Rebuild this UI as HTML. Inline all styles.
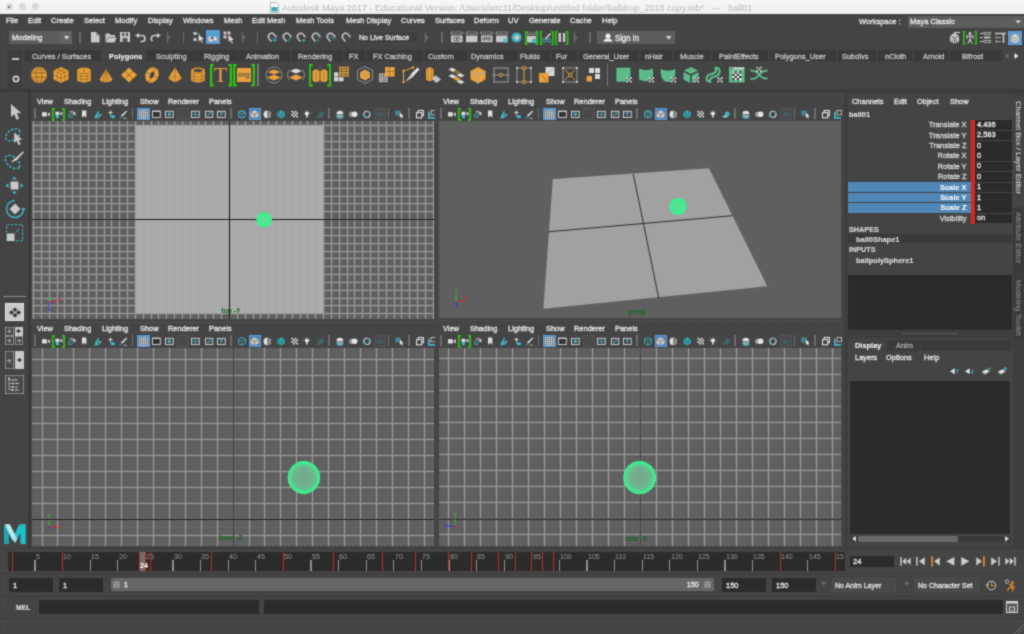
<!DOCTYPE html>
<html><head><meta charset="utf-8"><title>Autodesk Maya 2017</title>
<style>
html,body{margin:0;padding:0;}
body{width:1024px;height:634px;overflow:hidden;background:#444444;position:relative;font-family:"Liberation Sans",sans-serif;}
.t{position:absolute;white-space:pre;line-height:12px;height:12px;letter-spacing:0;transform:scaleX(0.93);transform-origin:0 50%;-webkit-text-stroke:0.32px currentColor;}
svg{overflow:visible;display:block}
#w{position:absolute;left:-6px;top:-6px;width:1036px;height:646px;background:linear-gradient(#f3f3f3 0 20px,#444444 20px);will-change:transform;filter:url(#soft);}
#i{position:absolute;left:6px;top:6px;width:1024px;height:634px;}
</style></head><body>
<svg width="0" height="0" style="position:absolute"><defs><filter id="soft" x="0" y="0" width="100%" height="100%" filterUnits="objectBoundingBox" color-interpolation-filters="sRGB"><feConvolveMatrix order="3" kernelMatrix="0.03 0.12 0.03 0.12 0.40 0.12 0.03 0.12 0.03" edgeMode="duplicate" preserveAlpha="true"/></filter></defs></svg>
<div id="w"><div id="i">

<div style="position:absolute;left:0px;top:0px;width:1024px;height:14px;background:linear-gradient(#f7f7f7,#efefef);"></div>
<div style="position:absolute;left:5.5px;top:3.1px;width:7px;height:7px;background:#dadada;border-radius:50%;"></div>
<div style="position:absolute;left:18.5px;top:3.1px;width:7px;height:7px;background:#dadada;border-radius:50%;"></div>
<div style="position:absolute;left:31.5px;top:3.1px;width:7px;height:7px;background:#dadada;border-radius:50%;"></div>
<div style="position:absolute;left:8px;top:5.6px;width:2px;height:2px;background:#555;border-radius:50%;"></div>
<svg style="position:absolute;left:270px;top:2px;" width="9" height="11" viewBox="0 0 9 11"><path d="M0.5 0.5h5.5l2.5 2.5v7.5h-8z" fill="#fff" stroke="#9aa" stroke-width="0.8"/><rect x="1.5" y="5" width="6" height="4.5" fill="#3aa6b8"/></svg>
<div class="t " style="left:282px;top:1.80px;font-size:9.05px;color:#bcbcbc;font-weight:normal;transform:none;-webkit-text-stroke:0">Autodesk Maya 2017 - Educational Version: /Users/wrc11/Desktop/untitled folder/balldrop_2018 copy.mb*   ---   ball01</div>
<div style="position:absolute;left:0px;top:14px;width:1024px;height:15px;background:#444444;"></div>
<div class="t " style="left:6px;top:15.40px;font-size:8.1px;color:#e6e6e6;font-weight:normal;">File</div>
<div class="t " style="left:28px;top:15.40px;font-size:8.1px;color:#e6e6e6;font-weight:normal;">Edit</div>
<div class="t " style="left:51px;top:15.40px;font-size:8.1px;color:#e6e6e6;font-weight:normal;">Create</div>
<div class="t " style="left:84px;top:15.40px;font-size:8.1px;color:#e6e6e6;font-weight:normal;">Select</div>
<div class="t " style="left:114.5px;top:15.40px;font-size:8.1px;color:#e6e6e6;font-weight:normal;">Modify</div>
<div class="t " style="left:148px;top:15.40px;font-size:8.1px;color:#e6e6e6;font-weight:normal;">Display</div>
<div class="t " style="left:183px;top:15.40px;font-size:8.1px;color:#e6e6e6;font-weight:normal;">Windows</div>
<div class="t " style="left:224px;top:15.40px;font-size:8.1px;color:#e6e6e6;font-weight:normal;">Mesh</div>
<div class="t " style="left:252px;top:15.40px;font-size:8.1px;color:#e6e6e6;font-weight:normal;">Edit Mesh</div>
<div class="t " style="left:296px;top:15.40px;font-size:8.1px;color:#e6e6e6;font-weight:normal;">Mesh Tools</div>
<div class="t " style="left:345.5px;top:15.40px;font-size:8.1px;color:#e6e6e6;font-weight:normal;">Mesh Display</div>
<div class="t " style="left:401px;top:15.40px;font-size:8.1px;color:#e6e6e6;font-weight:normal;">Curves</div>
<div class="t " style="left:435px;top:15.40px;font-size:8.1px;color:#e6e6e6;font-weight:normal;">Surfaces</div>
<div class="t " style="left:474px;top:15.40px;font-size:8.1px;color:#e6e6e6;font-weight:normal;">Deform</div>
<div class="t " style="left:507.5px;top:15.40px;font-size:8.1px;color:#e6e6e6;font-weight:normal;">UV</div>
<div class="t " style="left:529px;top:15.40px;font-size:8.1px;color:#e6e6e6;font-weight:normal;">Generate</div>
<div class="t " style="left:570px;top:15.40px;font-size:8.1px;color:#e6e6e6;font-weight:normal;">Cache</div>
<div class="t " style="left:601.5px;top:15.40px;font-size:8.1px;color:#e6e6e6;font-weight:normal;">Help</div>
<div class="t " style="left:859px;top:15.90px;font-size:8.1px;color:#e6e6e6;font-weight:normal;">Workspace :</div>
<div style="position:absolute;left:907.5px;top:15.5px;width:117px;height:12px;background:#5d5d5d;"></div>
<div class="t " style="left:910px;top:16.10px;font-size:8.1px;color:#e6e6e6;font-weight:normal;">Maya Classic</div>
<svg style="position:absolute;left:1015px;top:19.5px;" width="6.4" height="4" viewBox="0 0 8 5"><path d="M0.5 0.5h7l-3.5 4z" fill="#ddd"/></svg>
<div style="position:absolute;left:0px;top:29px;width:1024px;height:19px;background:#444444;"></div>
<div style="position:absolute;left:0px;top:47.5px;width:1024px;height:1px;background:#3a3a3a;"></div>
<div style="position:absolute;left:2px;top:31px;width:4px;height:14px;background:repeating-linear-gradient(#4c4c4c 0 1px,#404040 1px 2px);"></div>
<div style="position:absolute;left:9px;top:31px;width:63px;height:12.5px;background:#5d5d5d;"></div>
<div style="position:absolute;left:60px;top:31px;width:12px;height:12.5px;background:#646464;"></div>
<div class="t " style="left:11.5px;top:32.10px;font-size:8.1px;color:#e6e6e6;font-weight:normal;">Modeling</div>
<svg style="position:absolute;left:63.7px;top:35.9px;" width="5.4" height="3.5" viewBox="0 0 7 4.5"><path d="M0 0h7l-3.5 4.5z" fill="#e0e0e0"/></svg>
<div style="position:absolute;left:79.25px;top:32px;width:1.5px;height:11px;background:#6a6a6a;"></div>
<svg style="position:absolute;left:91px;top:32px;" width="9" height="10.5" viewBox="0 0 9 10.5"><path d="M0 0h5l3.5 3.5v7h-8.5z" fill="#c8c8c8"/><path d="M5 0v3.5h3.5" fill="#888"/></svg>
<svg style="position:absolute;left:104.5px;top:32.5px;" width="12" height="9.5" viewBox="0 0 12 9.5"><path d="M0.5 9.5v-9h4l1 1.5h4.5v2h-7l-2 5.5z" fill="#c8c8c8"/><path d="M1.2 9.5l2.2-5h8.4l-2.2 5z" fill="#c8c8c8"/></svg>
<svg style="position:absolute;left:120px;top:32px;" width="10" height="10" viewBox="0 0 10 10"><path d="M0 0h10v10h-10z" fill="#c8c8c8"/><rect x="2" y="0.8" width="6" height="3.4" fill="#555"/><rect x="2.5" y="6" width="5" height="4" fill="#555"/><rect x="4.2" y="1" width="1.6" height="3" fill="#c8c8c8"/></svg>
<svg style="position:absolute;left:134.5px;top:33px;" width="11" height="9" viewBox="0 0 11 9"><path d="M3.5 2.5h3.5a3 3 0 0 1 0 6h-1.5" fill="none" stroke="#c8c8c8" stroke-width="1.7"/><path d="M0 2.5l4-2.5v5z" fill="#c8c8c8"/></svg>
<svg style="position:absolute;left:149.5px;top:33px;" width="11" height="9" viewBox="0 0 11 9"><path d="M7.5 2.5h-3.5a3 3 0 0 0 -1.5 5.5" fill="none" stroke="#c8c8c8" stroke-width="1.7"/><path d="M11 2.5l-4-2.5v5z" fill="#c8c8c8"/></svg>
<svg style="position:absolute;left:167.4px;top:32px;" width="4" height="11" viewBox="0 0 4 11"><path d="M0.5 0v11" stroke="#6a6a6a" stroke-width="1.3"/><path d="M1 3l2.5 2.5l-2.5 2.5z" fill="#6a6a6a"/></svg>
<div style="position:absolute;left:182.65px;top:32px;width:1.5px;height:11px;background:#6a6a6a;"></div>
<svg style="position:absolute;left:192.5px;top:31px;" width="12" height="13" viewBox="0 0 12 13"><rect x="0.5" y="1" width="3" height="3" fill="#c8c8c8"/><rect x="0.5" y="7" width="3" height="3" fill="#c8c8c8"/><path d="M4 2.5h2v6" stroke="#3fb6c6" fill="none" stroke-width="1"/><path transform="translate(5.5,3.5) scale(0.95)" d="M0 0l0 7.5l1.9-1.6l1.5 3.1l1.4-0.7l-1.5-3l2.6-0.3z" fill="#e4e4e4" stroke="#555" stroke-width="0.4"/></svg>
<div style="position:absolute;left:206px;top:29.6px;width:14.3px;height:14.4px;background:#5b9bd5;"></div>
<svg style="position:absolute;left:207px;top:31px;" width="12" height="13" viewBox="0 0 12 13"><circle cx="4" cy="8" r="3" fill="#c8c8c8"/><path d="M4 8v-3a3 3 0 0 1 3 3z" fill="#666"/><rect x="5" y="1.5" width="4" height="4" fill="none" stroke="#3fb6c6" stroke-width="1"/><path transform="translate(6.5,4) scale(0.9)" d="M0 0l0 7.5l1.9-1.6l1.5 3.1l1.4-0.7l-1.5-3l2.6-0.3z" fill="#e4e4e4" stroke="#555" stroke-width="0.4"/></svg>
<svg style="position:absolute;left:223px;top:31px;" width="12" height="13" viewBox="0 0 12 13"><rect x="0.5" y="0.5" width="3" height="3" fill="#c8c8c8"/><rect x="4.5" y="0.5" width="3" height="3" fill="#c8c8c8"/><rect x="0.5" y="4.5" width="3" height="3" fill="#c8c8c8"/><rect x="4.5" y="4.5" width="3" height="3" fill="#d66"/><path transform="translate(5.5,4) scale(0.95)" d="M0 0l0 7.5l1.9-1.6l1.5 3.1l1.4-0.7l-1.5-3l2.6-0.3z" fill="#e4e4e4" stroke="#555" stroke-width="0.4"/></svg>
<svg style="position:absolute;left:241.5px;top:32px;" width="4" height="11" viewBox="0 0 4 11"><path d="M0.5 0v11" stroke="#6a6a6a" stroke-width="1.3"/><path d="M1 3l2.5 2.5l-2.5 2.5z" fill="#6a6a6a"/></svg>
<div style="position:absolute;left:256.75px;top:32px;width:1.5px;height:11px;background:#6a6a6a;"></div>
<svg style="position:absolute;left:266.9px;top:32.3px;" width="10.6" height="9.8" viewBox="0 0 13 12"><g transform="rotate(-40 6 6)"><path d="M2 10v-4.500a4 4 0 0 1 8 0v4.500" fill="none" stroke="#bcbcbc" stroke-width="2"/></g><path d="M7 8.5h5M7 10.5h5M8.5 7v5M10.5 7v5" stroke="#3fb6c6" stroke-width="0.7"/></svg>
<svg style="position:absolute;left:281.9px;top:32.3px;" width="10.6" height="9.8" viewBox="0 0 13 12"><g transform="rotate(-40 6 6)"><path d="M2 10v-4.500a4 4 0 0 1 8 0v4.500" fill="none" stroke="#bcbcbc" stroke-width="2"/></g><path d="M6 11q4-1 6-6" stroke="#3fb6c6" stroke-width="1.1" fill="none"/></svg>
<svg style="position:absolute;left:296.4px;top:32.3px;" width="10.6" height="9.8" viewBox="0 0 13 12"><g transform="rotate(-40 6 6)"><path d="M2 10v-4.500a4 4 0 0 1 8 0v4.500" fill="none" stroke="#bcbcbc" stroke-width="2"/></g><circle cx="9.5" cy="10" r="1.5" fill="#3fb6c6"/></svg>
<svg style="position:absolute;left:311.4px;top:32.3px;" width="10.6" height="9.8" viewBox="0 0 13 12"><g transform="rotate(-40 6 6)"><path d="M2 10v-4.500a4 4 0 0 1 8 0v4.500" fill="none" stroke="#bcbcbc" stroke-width="2"/></g><circle cx="10" cy="3" r="1.2" fill="none" stroke="#3fb6c6" stroke-width="0.7"/><circle cx="8.5" cy="10" r="1.2" fill="none" stroke="#3fb6c6" stroke-width="0.7"/></svg>
<svg style="position:absolute;left:326.4px;top:32.3px;" width="10.6" height="9.8" viewBox="0 0 13 12"><g transform="rotate(-40 6 6)"><path d="M2 10v-4.500a4 4 0 0 1 8 0v4.500" fill="none" stroke="#bcbcbc" stroke-width="2"/></g><path d="M5 5l5 5M7 4l5 5" stroke="#3fb6c6" stroke-width="0.8"/></svg>
<svg style="position:absolute;left:341.4px;top:32.3px;" width="10.6" height="9.8" viewBox="0 0 13 12"><g transform="rotate(-40 6 6)"><path d="M2 10v-4.500a4 4 0 0 1 8 0v4.500" fill="none" stroke="#bcbcbc" stroke-width="2"/></g></svg>
<div style="position:absolute;left:355.5px;top:31px;width:64px;height:12.5px;background:#404040;box-shadow:inset 0 0 0 0.5px #555;"></div>
<div class="t " style="left:359px;top:32.00px;font-size:7.6px;color:#e0e0e0;font-weight:normal;">No Live Surface</div>
<svg style="position:absolute;left:425.4px;top:32px;" width="4" height="11" viewBox="0 0 4 11"><path d="M0.5 0v11" stroke="#6a6a6a" stroke-width="1.3"/><path d="M1 3l2.5 2.5l-2.5 2.5z" fill="#6a6a6a"/></svg>
<div style="position:absolute;left:441.0px;top:32px;width:1.5px;height:11px;background:#6a6a6a;"></div>
<svg style="position:absolute;left:450.7px;top:32px;" width="11.5" height="10.5" viewBox="0 0 11.5 10.5"><path d="M0 0h11.5v2.2h-11.5z" fill="none" stroke="#c8c8c8" stroke-width="0.9" stroke-dasharray="1.6 1.2"/><rect x="0" y="3.6" width="11.5" height="6.6" fill="#c8c8c8"/><ellipse cx="5.7" cy="7" rx="3.5" ry="2" fill="none" stroke="#444" stroke-width="0.8"/><circle cx="5.7" cy="7" r="1" fill="#444"/></svg>
<svg style="position:absolute;left:465.7px;top:32px;" width="11.5" height="10.5" viewBox="0 0 11.5 10.5"><path d="M0 0h11.5v2.2h-11.5z" fill="none" stroke="#c8c8c8" stroke-width="0.9" stroke-dasharray="1.6 1.2"/><rect x="0" y="3.6" width="11.5" height="6.6" fill="#c8c8c8"/></svg>
<svg style="position:absolute;left:481px;top:32px;" width="11.5" height="10.5" viewBox="0 0 11.5 10.5"><path d="M0 0h11.5v2.2h-11.5z" fill="none" stroke="#c8c8c8" stroke-width="0.9" stroke-dasharray="1.6 1.2"/><rect x="0" y="3.6" width="11.5" height="6.6" fill="#c8c8c8"/><text x="5.7" y="9.3" font-size="5.5" font-weight="bold" text-anchor="middle" fill="#444" font-family="Liberation Sans, sans-serif">IPR</text></svg>
<svg style="position:absolute;left:496px;top:32px;" width="11.5" height="10.5" viewBox="0 0 11.5 10.5"><path d="M0 0h11.5v2.2h-11.5z" fill="none" stroke="#c8c8c8" stroke-width="0.9" stroke-dasharray="1.6 1.2"/><rect x="0" y="3.6" width="11.5" height="6.6" fill="#c8c8c8"/><circle cx="9.5" cy="8.5" r="2.6" fill="#3fb6c6" opacity="0.7"/></svg>
<svg style="position:absolute;left:511px;top:32px;" width="11" height="11" viewBox="0 0 11 11"><circle cx="5.5" cy="5.5" r="5" fill="#3fb6c6"/><circle cx="5.8" cy="5.5" r="2.3" fill="#ddc8b8"/></svg>
<svg style="position:absolute;left:526.5px;top:32.5px;" width="10" height="10" viewBox="0 0 10 10"><path d="M0 0h9v1.6h-9z" fill="none" stroke="#c8c8c8" stroke-width="0.8" stroke-dasharray="1.4 1"/><rect x="0" y="3" width="9" height="6.5" fill="#c8c8c8"/><circle cx="7.5" cy="8" r="2.4" fill="#3fb6c6"/></svg>
<svg style="position:absolute;left:524.5px;top:30.5px;" width="13.2" height="14" viewBox="0 0 13.2 14"><path d="M2.6 0.8h-1.8v12.4h1.8M10.6 0.8h1.8v12.4h-1.8" fill="none" stroke="#2fc214" stroke-width="1.6"/></svg>
<svg style="position:absolute;left:542px;top:32.5px;" width="10" height="10" viewBox="0 0 10 10"><path d="M8.5 0.5l-5 5.5" stroke="#c8c8c8" stroke-width="1.8"/><circle cx="2" cy="7.5" r="1.8" fill="none" stroke="#3fb6c6" stroke-width="1"/><circle cx="7" cy="7.5" r="1.8" fill="none" stroke="#3fb6c6" stroke-width="1"/></svg>
<svg style="position:absolute;left:539.5px;top:30.5px;" width="13.8" height="14" viewBox="0 0 13.8 14"><path d="M2.6 0.8h-1.8v12.4h1.8M11.200000000000001 0.8h1.8v12.4h-1.8" fill="none" stroke="#2fc214" stroke-width="1.6"/></svg>
<svg style="position:absolute;left:557.5px;top:33px;" width="8" height="9" viewBox="0 0 8 9"><rect x="0.5" y="0" width="2.5" height="9" fill="#c8c8c8"/><rect x="4.8" y="0" width="2.5" height="9" fill="#c8c8c8"/></svg>
<svg style="position:absolute;left:554.6px;top:30.5px;" width="13.4" height="14" viewBox="0 0 13.4 14"><path d="M2.6 0.8h-1.8v12.4h1.8M10.8 0.8h1.8v12.4h-1.8" fill="none" stroke="#2fc214" stroke-width="1.6"/></svg>
<svg style="position:absolute;left:574.3px;top:32px;" width="4" height="11" viewBox="0 0 4 11"><path d="M0.5 0v11" stroke="#6a6a6a" stroke-width="1.3"/><path d="M1 3l2.5 2.5l-2.5 2.5z" fill="#6a6a6a"/></svg>
<div style="position:absolute;left:589.25px;top:32px;width:1.5px;height:11px;background:#6a6a6a;"></div>
<div style="position:absolute;left:597.4px;top:30.5px;width:78px;height:13.3px;background:#5d5d5d;"></div>
<svg style="position:absolute;left:603px;top:32.5px;" width="10" height="10" viewBox="0 0 10 10"><circle cx="5" cy="3" r="2.6" fill="#eee"/><path d="M0 9.5q1-4 5-4q4 0 5 4z" fill="#eee"/><path d="M0 9.2h10" stroke="#222" stroke-width="0.8"/></svg>
<div class="t " style="left:615px;top:31.90px;font-size:8.3px;color:#eaeaea;font-weight:normal;">Sign In</div>
<svg style="position:absolute;left:666.3px;top:35.9px;" width="5.4" height="3.5" viewBox="0 0 7 4.5"><path d="M0 0h7l-3.5 4.5z" fill="#e0e0e0"/></svg>
<svg style="position:absolute;left:949px;top:31.5px;" width="11" height="12" viewBox="0 0 11 12"><path d="M1 3.5l4.5-2.5l4.5 2.5v6l-4.5 2.5l-4.5-2.5z" fill="#c8c8c8"/><path d="M1 3.5l4.5 2.5l4.5-2.5M5.5 6v6" stroke="#444" stroke-width="0.8" fill="none"/><path d="M3 7v4M7.5 7v4" stroke="#444" stroke-width="0.6"/><path d="M5 0.5h6" stroke="#c8c8c8" stroke-width="1.2"/></svg>
<svg style="position:absolute;left:966px;top:32px;" width="8" height="11.5" viewBox="0 0 8 11.5"><circle cx="4" cy="1.5" r="1.4" fill="#c8c8c8"/><path d="M0 4h8M4 3v4M4 7l-2 4.5M4 7l2 4.5M1 4v3M7 4v3" stroke="#c8c8c8" stroke-width="1.1" fill="none"/></svg>
<svg style="position:absolute;left:963px;top:30.7px;" width="14" height="13.6" viewBox="0 0 14 13.6"><path d="M2.6 0.8h-1.8v12.0h1.8M11.4 0.8h1.8v12.0h-1.8" fill="none" stroke="#2fc214" stroke-width="1.6"/></svg>
<svg style="position:absolute;left:980px;top:32px;" width="11" height="11" viewBox="0 0 11 11"><path d="M0 1.5h3M0 5.5h3M0 9.5h3" stroke="#c8c8c8" stroke-width="1"/><rect x="4" y="0.5" width="6.5" height="2" fill="none" stroke="#c8c8c8" stroke-width="0.8"/><rect x="4" y="4.5" width="6.5" height="2" fill="#c8c8c8"/><rect x="4" y="8.5" width="6.5" height="2" fill="none" stroke="#c8c8c8" stroke-width="0.8"/></svg>
<svg style="position:absolute;left:994.5px;top:32px;" width="11" height="11" viewBox="0 0 11 11"><path d="M0 1.5h11M8.5 1.5v9.5" stroke="#c8c8c8" stroke-width="1.6"/><circle cx="1.5" cy="5.5" r="1" fill="#c8c8c8"/><circle cx="1.5" cy="9.5" r="1" fill="#c8c8c8"/><path d="M3 5.5h3M3 9.5h3" stroke="#c8c8c8" stroke-width="0.8"/></svg>
<div style="position:absolute;left:1008px;top:30.7px;width:14px;height:14.1px;background:#5b9bd5;"></div>
<svg style="position:absolute;left:1010px;top:32.5px;" width="10" height="11" viewBox="0 0 10 11"><path d="M0.5 3l4.5-2.5l4.5 2.5v5l-4.5 2.5l-4.5-2.5z" fill="#d8d8d8" stroke="#888" stroke-width="0.6"/><path d="M0.5 3l4.5 2.5l4.5-2.5M0.5 5.5l4.5 2.5l4.5-2.5" stroke="#777" stroke-width="0.7" fill="none"/></svg>
<div style="position:absolute;left:0px;top:48px;width:1024px;height:43px;background:#444444;"></div>
<div style="position:absolute;left:0px;top:89px;width:1024px;height:3px;background:#3b3b3b;"></div>
<div style="position:absolute;left:2px;top:50px;width:4px;height:38px;background:repeating-linear-gradient(#4c4c4c 0 1px,#404040 1px 2px);"></div>
<div style="position:absolute;left:8px;top:50px;width:14px;height:39px;background:#3e3e3e;"></div>
<div style="position:absolute;left:12px;top:57.5px;width:7px;height:2.5px;background:#bdbdbd;"></div>
<svg style="position:absolute;left:11.5px;top:75px;" width="8" height="8" viewBox="0 0 8 8"><circle cx="4" cy="4" r="2.6" fill="none" stroke="#d0d0d0" stroke-width="1.7"/></svg>
<div style="position:absolute;left:24px;top:50px;width:978px;height:11.3px;background:#3a3a3a;"></div>
<div style="position:absolute;left:100.5px;top:50px;width:1.5px;height:11.3px;background:#424242;"></div>
<div class="t " style="left:32px;top:50.60px;font-size:8px;color:#c2c2c2;font-weight:normal;">Curves / Surfaces</div>
<div style="position:absolute;left:102px;top:50px;width:44px;height:12px;background:#444444;"></div>
<div class="t " style="left:108.5px;top:50.60px;font-size:8px;color:#ffffff;font-weight:bold;-webkit-text-stroke:0.05px currentColor">Polygons</div>
<div style="position:absolute;left:193.7px;top:50px;width:1.5px;height:11.3px;background:#424242;"></div>
<div class="t " style="left:155.5px;top:50.60px;font-size:8px;color:#c2c2c2;font-weight:normal;">Sculpting</div>
<div style="position:absolute;left:237.5px;top:50px;width:1.5px;height:11.3px;background:#424242;"></div>
<div class="t " style="left:204px;top:50.60px;font-size:8px;color:#c2c2c2;font-weight:normal;">Rigging</div>
<div style="position:absolute;left:290px;top:50px;width:1.5px;height:11.3px;background:#424242;"></div>
<div class="t " style="left:246px;top:50.60px;font-size:8px;color:#c2c2c2;font-weight:normal;">Animation</div>
<div style="position:absolute;left:343px;top:50px;width:1.5px;height:11.3px;background:#424242;"></div>
<div class="t " style="left:297.5px;top:50.60px;font-size:8px;color:#c2c2c2;font-weight:normal;">Rendering</div>
<div style="position:absolute;left:365px;top:50px;width:1.5px;height:11.3px;background:#424242;"></div>
<div class="t " style="left:348.5px;top:50.60px;font-size:8px;color:#c2c2c2;font-weight:normal;">FX</div>
<div style="position:absolute;left:423px;top:50px;width:1.5px;height:11.3px;background:#424242;"></div>
<div class="t " style="left:373px;top:50.60px;font-size:8px;color:#c2c2c2;font-weight:normal;">FX Caching</div>
<div style="position:absolute;left:468px;top:50px;width:1.5px;height:11.3px;background:#424242;"></div>
<div class="t " style="left:427.5px;top:50.60px;font-size:8px;color:#c2c2c2;font-weight:normal;">Custom</div>
<div style="position:absolute;left:517px;top:50px;width:1.5px;height:11.3px;background:#424242;"></div>
<div class="t " style="left:470.5px;top:50.60px;font-size:8px;color:#c2c2c2;font-weight:normal;">Dynamics</div>
<div style="position:absolute;left:550px;top:50px;width:1.5px;height:11.3px;background:#424242;"></div>
<div class="t " style="left:519.5px;top:50.60px;font-size:8px;color:#c2c2c2;font-weight:normal;">Fluids</div>
<div style="position:absolute;left:577px;top:50px;width:1.5px;height:11.3px;background:#424242;"></div>
<div class="t " style="left:556px;top:50.60px;font-size:8px;color:#c2c2c2;font-weight:normal;">Fur</div>
<div style="position:absolute;left:638px;top:50px;width:1.5px;height:11.3px;background:#424242;"></div>
<div class="t " style="left:583px;top:50.60px;font-size:8px;color:#c2c2c2;font-weight:normal;">General_User</div>
<div style="position:absolute;left:672px;top:50px;width:1.5px;height:11.3px;background:#424242;"></div>
<div class="t " style="left:644.5px;top:50.60px;font-size:8px;color:#c2c2c2;font-weight:normal;">nHair</div>
<div style="position:absolute;left:710px;top:50px;width:1.5px;height:11.3px;background:#424242;"></div>
<div class="t " style="left:679.5px;top:50.60px;font-size:8px;color:#c2c2c2;font-weight:normal;">Muscle</div>
<div style="position:absolute;left:768px;top:50px;width:1.5px;height:11.3px;background:#424242;"></div>
<div class="t " style="left:719px;top:50.60px;font-size:8px;color:#c2c2c2;font-weight:normal;">PaintEffects</div>
<div style="position:absolute;left:836px;top:50px;width:1.5px;height:11.3px;background:#424242;"></div>
<div class="t " style="left:775px;top:50.60px;font-size:8px;color:#c2c2c2;font-weight:normal;">Polygons_User</div>
<div style="position:absolute;left:876px;top:50px;width:1.5px;height:11.3px;background:#424242;"></div>
<div class="t " style="left:841.5px;top:50.60px;font-size:8px;color:#c2c2c2;font-weight:normal;">Subdivs</div>
<div style="position:absolute;left:912px;top:50px;width:1.5px;height:11.3px;background:#424242;"></div>
<div class="t " style="left:884.5px;top:50.60px;font-size:8px;color:#c2c2c2;font-weight:normal;">nCloth</div>
<div style="position:absolute;left:948px;top:50px;width:1.5px;height:11.3px;background:#424242;"></div>
<div class="t " style="left:922.5px;top:50.60px;font-size:8px;color:#c2c2c2;font-weight:normal;">Arnold</div>
<div style="position:absolute;left:1002px;top:50px;width:1.5px;height:11.3px;background:#424242;"></div>
<div class="t " style="left:961.5px;top:50.60px;font-size:8px;color:#c2c2c2;font-weight:normal;">Bifrost</div>
<svg style="position:absolute;left:1004px;top:53px;" width="5" height="6" viewBox="0 0 5 6"><path d="M4.5 0v6l-4-3z" fill="#666"/></svg>
<svg style="position:absolute;left:1014px;top:53px;" width="5" height="6" viewBox="0 0 5 6"><path d="M0.5 0v6l4-3z" fill="#e8e8e8"/></svg>
<svg style="position:absolute;left:28.5px;top:65.0px;" width="20" height="20" viewBox="0 0 20 20"><circle cx="10" cy="10" r="8" fill="#e8a13c"/><ellipse cx="10" cy="10" rx="8" ry="3" fill="none" stroke="#8f6220" stroke-width="0.7"/><ellipse cx="10" cy="6.5" rx="6.5" ry="2.2" fill="none" stroke="#8f6220" stroke-width="0.7"/><ellipse cx="10" cy="13.8" rx="6.5" ry="2.2" fill="none" stroke="#8f6220" stroke-width="0.7"/><ellipse cx="10" cy="10" rx="3" ry="8" fill="none" stroke="#8f6220" stroke-width="0.7"/></svg>
<svg style="position:absolute;left:50.6px;top:65.0px;" width="20" height="20" viewBox="0 0 20 20"><path d="M10 2l7.5 3.5v9l-7.5 3.5l-7.5-3.5v-9z" fill="#e8a13c"/><path d="M2.5 5.5l7.5 3.5l7.5-3.5M10 9v9M2.5 10l7.5 3.5l7.500-3.5M6.200 7.200v9M13.800 7.200v9M6.200 3.800l7.500 3.500M13.800 3.800l-7.500 3.500" fill="none" stroke="#8f6220" stroke-width="0.7"/></svg>
<svg style="position:absolute;left:73.7px;top:65.0px;" width="20" height="20" viewBox="0 0 20 20"><path d="M3 5.500v9a7 3 0 0 0 14 0v-9z" fill="#e8a13c"/><ellipse cx="10" cy="5.500" rx="7" ry="3" fill="#e8a13c" stroke="#8f6220" stroke-width="0.7"/><path d="M3 8.500a7 3 0 0 0 14 0M3 11.500a7 3 0 0 0 14 0M7 8v9.500M13 8v9.500M10 2.500v6" fill="none" stroke="#8f6220" stroke-width="0.7"/></svg>
<svg style="position:absolute;left:96.0px;top:65.0px;" width="20" height="20" viewBox="0 0 20 20"><path d="M10 4l6.3 10.5a6.3 2.8 0 0 1-12.6 0z" fill="#e8a13c"/><path d="M10 4v13.3M10 4l-3.3 12.6M10 4l3.3 12.6" stroke="#8f6220" stroke-width="0.7" fill="none"/></svg>
<svg style="position:absolute;left:119.4px;top:65.0px;" width="20" height="20" viewBox="0 0 20 20"><path d="M10 2.500l8 7.500l-8 7.500l-8-7.500z" fill="#e8a13c"/><path d="M6 6.200l8 7.600M14 6.200l-8 7.600" stroke="#8f6220" stroke-width="0.8"/></svg>
<svg style="position:absolute;left:142.2px;top:65.0px;" width="20" height="20" viewBox="0 0 20 20"><g transform="rotate(25 10 10)"><ellipse cx="10" cy="10" rx="6.500" ry="8" fill="#e8a13c"/><ellipse cx="10" cy="10" rx="2" ry="3.600" fill="#444444"/><path d="M10 2v4.400M10 13.600v4.400M3.500 10h4.500M12 10h4.500" stroke="#8f6220" stroke-width="0.7"/></g></svg>
<svg style="position:absolute;left:164.7px;top:65.0px;" width="20" height="20" viewBox="0 0 20 20"><path d="M10 2.500l7 11l-7 4l-7-4z" fill="#e8a13c"/><path d="M10 2.500v15" stroke="#8f6220" stroke-width="0.7"/><path d="M3 13.500l7-2l7 2" stroke="#8f6220" stroke-width="0.5" fill="none"/></svg>
<svg style="position:absolute;left:187.5px;top:65.0px;" width="20" height="20" viewBox="0 0 20 20"><path d="M3 5.500v9a7 3 0 0 0 14 0v-9z" fill="#e8a13c"/><ellipse cx="10" cy="5.500" rx="7" ry="3" fill="#e8a13c" stroke="#8f6220" stroke-width="0.6"/><ellipse cx="10" cy="5.500" rx="4.500" ry="1.800" fill="#4a4a4a"/><path d="M3 9a7 3 0 0 0 14 0M3 12a7 3 0 0 0 14 0M6 8v9M14 8v9" fill="none" stroke="#8f6220" stroke-width="0.7"/></svg>
<svg style="position:absolute;left:210px;top:64px;" width="22" height="22.5" viewBox="0 0 22 22.5"><path d="M3.7 1.15h-2.5500000000000003v20.2h2.5500000000000003M18.3 1.15h2.5500000000000003v20.2h-2.5500000000000003" fill="none" stroke="#2fc214" stroke-width="2.3"/></svg>
<div style="position:absolute;left:211.5px;top:61.1px;width:18px;height:28px;font-family:'Liberation Serif',serif;font-size:22px;line-height:28px;color:#e8a13c;text-align:center;">T</div>
<svg style="position:absolute;left:232.5px;top:64px;" width="22" height="22.5" viewBox="0 0 22 22.5"><path d="M3.7 1.15h-2.5500000000000003v20.2h2.5500000000000003M18.3 1.15h2.5500000000000003v20.2h-2.5500000000000003" fill="none" stroke="#2fc214" stroke-width="2.3"/></svg>
<div style="position:absolute;left:237px;top:67.7px;width:14px;height:14.3px;background:#e8a13c;"></div>
<div class="t " style="left:238px;top:69.10px;font-size:7.2px;color:#6a5a48;font-weight:bold;-webkit-text-stroke:0.05px currentColor">svg</div>
<div style="position:absolute;left:257.25px;top:64px;width:1.5px;height:22px;background:#767676;"></div>
<svg style="position:absolute;left:263.9px;top:65.0px;" width="20" height="20" viewBox="0 0 20 20"><circle cx="10" cy="10" r="8" fill="none" stroke="#8a8a8a" stroke-width="1"/><path d="M10 4.500l6.500 2.500l-6.500 2.500l-6.500-2.500z" fill="#e8a13c"/><path d="M10 9.500l7 3l-7 3l-7-3z" fill="#e8a13c"/></svg>
<svg style="position:absolute;left:286.0px;top:65.0px;" width="20" height="20" viewBox="0 0 20 20"><path d="M3.500 5a8 8 0 0 0 0 10M16.500 5a8 8 0 0 1 0 10" fill="none" stroke="#8a8a8a" stroke-width="1"/><path d="M10 3.500l6 2.500l-6 2.500l-6-2.500z" fill="#d8d8d8"/><path d="M10 9.500l7 3l-7 3l-7-3z" fill="#e8a13c"/></svg>
<svg style="position:absolute;left:308.5px;top:64px;" width="22" height="22.5" viewBox="0 0 22 22.5"><path d="M3.7 0.95h-2.75v20.6h2.75M18.3 0.95h2.75v20.6h-2.75" fill="none" stroke="#2fc214" stroke-width="1.9"/></svg>
<svg style="position:absolute;left:309.5px;top:65.0px;" width="20" height="20" viewBox="0 0 20 20"><path d="M2.500 6.500l2-2h3l2 2v9l-2 1.500h-3l-2-1.500z" fill="#e8a13c"/><path d="M10.500 6.500l2-2h3l2 2v9l-2 1.500h-3l-2-1.500z" fill="#e8a13c"/><path d="M6 6v10M14 6v10" stroke="#8f6220" stroke-width="0.6"/><path d="M10 2v16" stroke="#999" stroke-width="0.7" stroke-dasharray="1.500 1.500"/></svg>
<svg style="position:absolute;left:332.0px;top:65.0px;" width="20" height="20" viewBox="0 0 20 20"><rect x="2.0" y="7.3" width="4.5" height="4.2" fill="#d4d4d4"/><rect x="2.0" y="12.1" width="4.5" height="4.2" fill="#d4d4d4"/><rect x="7.1" y="7.3" width="4.5" height="4.2" fill="#d4d4d4"/><rect x="7.1" y="12.1" width="4.5" height="4.2" fill="#d4d4d4"/><rect x="6.8" y="1.2" width="10.600" height="11" fill="#444444"/><rect x="7.2" y="1.6" width="2" height="2.100" fill="#e8a13c"/><rect x="7.2" y="4.25" width="2" height="2.100" fill="#e8a13c"/><rect x="7.2" y="6.9" width="2" height="2.100" fill="#e8a13c"/><rect x="7.2" y="9.549999999999999" width="2" height="2.100" fill="#e8a13c"/><rect x="9.75" y="1.6" width="2" height="2.100" fill="#e8a13c"/><rect x="9.75" y="4.25" width="2" height="2.100" fill="#e8a13c"/><rect x="9.75" y="6.9" width="2" height="2.100" fill="#e8a13c"/><rect x="9.75" y="9.549999999999999" width="2" height="2.100" fill="#e8a13c"/><rect x="12.3" y="1.6" width="2" height="2.100" fill="#e8a13c"/><rect x="12.3" y="4.25" width="2" height="2.100" fill="#e8a13c"/><rect x="12.3" y="6.9" width="2" height="2.100" fill="#e8a13c"/><rect x="12.3" y="9.549999999999999" width="2" height="2.100" fill="#e8a13c"/><rect x="14.85" y="1.6" width="2" height="2.100" fill="#e8a13c"/><rect x="14.85" y="4.25" width="2" height="2.100" fill="#e8a13c"/><rect x="14.85" y="6.9" width="2" height="2.100" fill="#e8a13c"/><rect x="14.85" y="9.549999999999999" width="2" height="2.100" fill="#e8a13c"/></svg>
<svg style="position:absolute;left:354.5px;top:65.0px;" width="20" height="20" viewBox="0 0 20 20"><path d="M10 1.500l7.500 4v9l-7.500 4l-7.500-4v-9z" fill="none" stroke="#9a9a9a" stroke-width="0.900"/><path d="M10 4.500l5 2.700v5.600l-5 2.700l-5-2.700v-5.600z" fill="#e8a13c"/><path d="M5 7.200l5 2.600l5-2.600M10 9.800v5.700" stroke="#9a9a9a" stroke-width="0.700" fill="none"/></svg>
<svg style="position:absolute;left:377.6px;top:65.0px;" width="20" height="20" viewBox="0 0 20 20"><rect x="1.0" y="8.5" width="1.700" height="1.700" fill="#d8d8d8"/><rect x="1.0" y="10.8" width="1.700" height="1.700" fill="#d8d8d8"/><rect x="1.0" y="13.1" width="1.700" height="1.700" fill="#d8d8d8"/><rect x="1.0" y="15.399999999999999" width="1.700" height="1.700" fill="#d8d8d8"/><rect x="3.3" y="8.5" width="1.700" height="1.700" fill="#d8d8d8"/><rect x="3.3" y="10.8" width="1.700" height="1.700" fill="#d8d8d8"/><rect x="3.3" y="13.1" width="1.700" height="1.700" fill="#d8d8d8"/><rect x="3.3" y="15.399999999999999" width="1.700" height="1.700" fill="#d8d8d8"/><rect x="5.6" y="8.5" width="1.700" height="1.700" fill="#d8d8d8"/><rect x="5.6" y="10.8" width="1.700" height="1.700" fill="#d8d8d8"/><rect x="5.6" y="13.1" width="1.700" height="1.700" fill="#d8d8d8"/><rect x="5.6" y="15.399999999999999" width="1.700" height="1.700" fill="#d8d8d8"/><rect x="7.8999999999999995" y="8.5" width="1.700" height="1.700" fill="#d8d8d8"/><rect x="7.8999999999999995" y="10.8" width="1.700" height="1.700" fill="#d8d8d8"/><rect x="7.8999999999999995" y="13.1" width="1.700" height="1.700" fill="#d8d8d8"/><rect x="7.8999999999999995" y="15.399999999999999" width="1.700" height="1.700" fill="#d8d8d8"/><rect x="7" y="2" width="4.600" height="4.600" fill="#e8a13c"/><rect x="7" y="7" width="4.600" height="4.600" fill="#e8a13c"/><rect x="12" y="2" width="4.600" height="4.600" fill="#e8a13c"/><rect x="12" y="7" width="4.600" height="4.600" fill="#e8a13c"/></svg>
<svg style="position:absolute;left:400.7px;top:65.0px;" width="20" height="20" viewBox="0 0 20 20"><path d="M2.500 6l9.500-3.500M2.500 6l0 11" stroke="#e8a13c" stroke-width="1" fill="none"/><circle cx="2.500" cy="6" r="1.300" fill="#e8a13c"/><circle cx="12" cy="2.500" r="1.300" fill="#e8a13c"/><circle cx="2.500" cy="17" r="1.300" fill="#e8a13c"/><path d="M16.500 2.500l2 2l-6.500 7l-2.300-2.300z" fill="#e4e4e4"/><path d="M10 9.500l2.300 2.300l-8.300 5.200z" fill="#d4d4d4"/></svg>
<svg style="position:absolute;left:422.6px;top:65.0px;" width="20" height="20" viewBox="0 0 20 20"><path d="M3 4.500l2-2h3.500l2 2v10l-2 1.500h-3.500l-2-1.500z" fill="#e8a13c"/><path d="M5 2.500v13.500M8.500 2.500v13.500" stroke="#8f6220" stroke-width="0.500"/><path d="M9 13l4-2.500l5 4l-5 3.500z" fill="#d8d8d8"/><path d="M13.500 10.500v7M9 13l9 1.500" stroke="#888" stroke-width="0.500"/></svg>
<svg style="position:absolute;left:445.7px;top:65.0px;" width="20" height="20" viewBox="0 0 20 20"><path d="M2.500 4.500l3.500-2l4.500 2.500l-3.500 2z" fill="#d8d8d8"/><path d="M10.500 10l3.500-2l4.500 2.500l-3.500 2z" fill="#d8d8d8"/><path d="M2.500 11l3.500-2l4.500 2.500l-3.500 2z" fill="#d8d8d8"/><path d="M10.500 16.500l3.500-2l4.500 2.500l-3.500 2z" fill="#d8d8d8"/><path d="M7 13.500l3.500-2l4 2.500l-3.500 2z" fill="#e8a13c"/><path d="M7 7l3.500-2l4 2.500l-3.500 2z" fill="#8a6a3a"/></svg>
<svg style="position:absolute;left:468.2px;top:65.0px;" width="20" height="20" viewBox="0 0 20 20"><path d="M10 2l7.500 4v8.500l-7.500 4l-7.500-4v-8.500z" fill="#e8a13c"/><path d="M2.500 6l7.500 4l7.500-4M10 10v8.500" stroke="#a8a8a8" stroke-width="1.200" fill="none"/></svg>
<svg style="position:absolute;left:490.9px;top:65.0px;" width="20" height="20" viewBox="0 0 20 20"><rect x="3" y="3" width="14" height="14" fill="none" stroke="#a0a0a0" stroke-width="1"/><path d="M1.500 10h17" stroke="#a0a0a0" stroke-width="1"/><circle cx="10" cy="10" r="1.600" fill="#444444" stroke="#e8a13c" stroke-width="1"/></svg>
<svg style="position:absolute;left:513.9px;top:65.0px;" width="20" height="20" viewBox="0 0 20 20"><rect x="3" y="3" width="14" height="14" fill="none" stroke="#a0a0a0" stroke-width="0.900"/><rect x="2" y="2" width="2" height="2" fill="#c8c8c8"/><rect x="16" y="2" width="2" height="2" fill="#c8c8c8"/><rect x="2" y="16" width="2" height="2" fill="#c8c8c8"/><rect x="16" y="16" width="2" height="2" fill="#c8c8c8"/><path d="M10 3v14" stroke="#e8a13c" stroke-width="1"/><rect x="8.700" y="1.700" width="2.600" height="2.600" fill="#444444" stroke="#e8a13c" stroke-width="0.900"/><rect x="8.700" y="15.700" width="2.600" height="2.600" fill="#444444" stroke="#e8a13c" stroke-width="0.900"/></svg>
<svg style="position:absolute;left:536.7px;top:65.0px;" width="20" height="20" viewBox="0 0 20 20"><rect x="8.500" y="2" width="9" height="9" fill="#d8d8d8"/><path d="M9 10.500l8-8" stroke="#999" stroke-width="0.800"/><rect x="2" y="8" width="9.500" height="9.500" fill="#e8a13c"/><path d="M3.500 9.500l6.500 6.500" stroke="#8f6220" stroke-width="0.800"/></svg>
<svg style="position:absolute;left:559.9px;top:65.0px;" width="20" height="20" viewBox="0 0 20 20"><rect x="3" y="3" width="14" height="14" fill="none" stroke="#a0a0a0" stroke-width="0.900"/><rect x="2" y="2" width="2" height="2" fill="#c8c8c8"/><rect x="16" y="2" width="2" height="2" fill="#c8c8c8"/><rect x="2" y="16" width="2" height="2" fill="#c8c8c8"/><rect x="16" y="16" width="2" height="2" fill="#c8c8c8"/><path d="M5 5l10 10M15 5l-10 10" stroke="#e8a13c" stroke-width="0.800"/><rect x="8.500" y="8.500" width="3" height="3" fill="#444444" stroke="#e8a13c" stroke-width="0.900"/></svg>
<svg style="position:absolute;left:582.4px;top:65.0px;" width="20" height="20" viewBox="0 0 20 20"><rect x="7" y="3" width="5" height="5" fill="#d8d8d8"/><rect x="13" y="3" width="5" height="5" fill="#d8d8d8"/><rect x="13" y="9" width="5" height="5" fill="#d8d8d8"/><rect x="4.500" y="11" width="5.500" height="5.500" fill="#e8a13c"/></svg>
<div style="position:absolute;left:606.95px;top:64px;width:1.5px;height:22px;background:#767676;"></div>
<svg style="position:absolute;left:613.5px;top:65.0px;" width="20" height="20" viewBox="0 0 20 20"><rect x="2.400" y="2.700" width="14" height="14" fill="#5dbb8b"/><rect x="12.5" y="12.3" width="1.7" height="1.7" fill="#f0f0f0"/><rect x="12.5" y="14.0" width="1.7" height="1.7" fill="#3c3c3c"/><rect x="12.5" y="15.700000000000001" width="1.7" height="1.7" fill="#f0f0f0"/><rect x="14.2" y="12.3" width="1.7" height="1.7" fill="#3c3c3c"/><rect x="14.2" y="14.0" width="1.7" height="1.7" fill="#f0f0f0"/><rect x="14.2" y="15.700000000000001" width="1.7" height="1.7" fill="#3c3c3c"/><rect x="15.9" y="12.3" width="1.7" height="1.7" fill="#f0f0f0"/><rect x="15.9" y="14.0" width="1.7" height="1.7" fill="#3c3c3c"/><rect x="15.9" y="15.700000000000001" width="1.7" height="1.7" fill="#f0f0f0"/></svg>
<svg style="position:absolute;left:635.9px;top:65.0px;" width="20" height="20" viewBox="0 0 20 20"><path d="M3 3.500q7 3.500 14 0v11q-7 3.500-14 0z" fill="#5dbb8b"/><rect x="13.0" y="12.3" width="1.7" height="1.7" fill="#f0f0f0"/><rect x="13.0" y="14.0" width="1.7" height="1.7" fill="#3c3c3c"/><rect x="13.0" y="15.700000000000001" width="1.7" height="1.7" fill="#f0f0f0"/><rect x="14.7" y="12.3" width="1.7" height="1.7" fill="#3c3c3c"/><rect x="14.7" y="14.0" width="1.7" height="1.7" fill="#f0f0f0"/><rect x="14.7" y="15.700000000000001" width="1.7" height="1.7" fill="#3c3c3c"/><rect x="16.4" y="12.3" width="1.7" height="1.7" fill="#f0f0f0"/><rect x="16.4" y="14.0" width="1.7" height="1.7" fill="#3c3c3c"/><rect x="16.4" y="15.700000000000001" width="1.7" height="1.7" fill="#f0f0f0"/></svg>
<svg style="position:absolute;left:658.4px;top:65.0px;" width="20" height="20" viewBox="0 0 20 20"><path d="M2.500 4q7.500 3.500 15 0q0 13-7.500 13q-7.500 0-7.500-13z" fill="#5dbb8b"/><rect x="13.0" y="12.3" width="1.7" height="1.7" fill="#f0f0f0"/><rect x="13.0" y="14.0" width="1.7" height="1.7" fill="#3c3c3c"/><rect x="13.0" y="15.700000000000001" width="1.7" height="1.7" fill="#f0f0f0"/><rect x="14.7" y="12.3" width="1.7" height="1.7" fill="#3c3c3c"/><rect x="14.7" y="14.0" width="1.7" height="1.7" fill="#f0f0f0"/><rect x="14.7" y="15.700000000000001" width="1.7" height="1.7" fill="#3c3c3c"/><rect x="16.4" y="12.3" width="1.7" height="1.7" fill="#f0f0f0"/><rect x="16.4" y="14.0" width="1.7" height="1.7" fill="#3c3c3c"/><rect x="16.4" y="15.700000000000001" width="1.7" height="1.7" fill="#f0f0f0"/></svg>
<svg style="position:absolute;left:680.9px;top:65.0px;" width="20" height="20" viewBox="0 0 20 20"><path d="M10 2l7 3.500l-7 3.500l-7-3.500z" fill="#5dbb8b"/><path d="M2.500 7l6.700 3.400v7.600l-6.700-3.500z" fill="#5dbb8b"/><path d="M17.500 7l-6.700 3.400v7.600l6.700-3.500z" fill="#5dbb8b"/><rect x="13.0" y="12.3" width="1.7" height="1.7" fill="#f0f0f0"/><rect x="13.0" y="14.0" width="1.7" height="1.7" fill="#3c3c3c"/><rect x="13.0" y="15.700000000000001" width="1.7" height="1.7" fill="#f0f0f0"/><rect x="14.7" y="12.3" width="1.7" height="1.7" fill="#3c3c3c"/><rect x="14.7" y="14.0" width="1.7" height="1.7" fill="#f0f0f0"/><rect x="14.7" y="15.700000000000001" width="1.7" height="1.7" fill="#3c3c3c"/><rect x="16.4" y="12.3" width="1.7" height="1.7" fill="#f0f0f0"/><rect x="16.4" y="14.0" width="1.7" height="1.7" fill="#3c3c3c"/><rect x="16.4" y="15.700000000000001" width="1.7" height="1.7" fill="#f0f0f0"/></svg>
<svg style="position:absolute;left:704.0px;top:65.0px;" width="20" height="20" viewBox="0 0 20 20"><path d="M3.500 16q-2.500-5 2.500-6.500q5-1 6-3.500q0.500-2.500-1-3.500q5.500 0.500 4.500 5q-1 3.500-6 4.500q-4 1-3.500 4.500z" fill="none" stroke="#5dbb8b" stroke-width="2.200"/><rect x="13.5" y="12.3" width="1.7" height="1.7" fill="#f0f0f0"/><rect x="13.5" y="14.0" width="1.7" height="1.7" fill="#3c3c3c"/><rect x="13.5" y="15.700000000000001" width="1.7" height="1.7" fill="#f0f0f0"/><rect x="15.2" y="12.3" width="1.7" height="1.7" fill="#3c3c3c"/><rect x="15.2" y="14.0" width="1.7" height="1.7" fill="#f0f0f0"/><rect x="15.2" y="15.700000000000001" width="1.7" height="1.7" fill="#3c3c3c"/><rect x="16.9" y="12.3" width="1.7" height="1.7" fill="#f0f0f0"/><rect x="16.9" y="14.0" width="1.7" height="1.7" fill="#3c3c3c"/><rect x="16.9" y="15.700000000000001" width="1.7" height="1.7" fill="#f0f0f0"/></svg>
<svg style="position:absolute;left:729px;top:67px;" width="15.5" height="15.5" viewBox="0 0 15.5 15.5"><rect x="0" y="0" width="15.500" height="15.500" fill="#5dbb8b"/><rect x="0.500" y="0.500" width="14.500" height="2" fill="#d0d0d0"/><rect x="1" y="1" width="3" height="1" fill="#555"/><rect x="3.5" y="4.5" width="2.200" height="2.200" fill="#f0f0f0"/><rect x="3.5" y="6.7" width="2.200" height="2.200" fill="#333"/><rect x="3.5" y="8.9" width="2.200" height="2.200" fill="#f0f0f0"/><rect x="3.5" y="11.100000000000001" width="2.200" height="2.200" fill="#333"/><rect x="5.7" y="4.5" width="2.200" height="2.200" fill="#333"/><rect x="5.7" y="6.7" width="2.200" height="2.200" fill="#f0f0f0"/><rect x="5.7" y="8.9" width="2.200" height="2.200" fill="#333"/><rect x="5.7" y="11.100000000000001" width="2.200" height="2.200" fill="#f0f0f0"/><rect x="7.9" y="4.5" width="2.200" height="2.200" fill="#f0f0f0"/><rect x="7.9" y="6.7" width="2.200" height="2.200" fill="#333"/><rect x="7.9" y="8.9" width="2.200" height="2.200" fill="#f0f0f0"/><rect x="7.9" y="11.100000000000001" width="2.200" height="2.200" fill="#333"/><rect x="10.100000000000001" y="4.5" width="2.200" height="2.200" fill="#333"/><rect x="10.100000000000001" y="6.7" width="2.200" height="2.200" fill="#f0f0f0"/><rect x="10.100000000000001" y="8.9" width="2.200" height="2.200" fill="#333"/><rect x="10.100000000000001" y="11.100000000000001" width="2.200" height="2.200" fill="#f0f0f0"/></svg>
<svg style="position:absolute;left:749.0px;top:65.0px;" width="20" height="20" viewBox="0 0 20 20"><path d="M1.500 5.500q5-0.500 8.500 4q3.500 4.500 8.500 4" stroke="#5dbb8b" stroke-width="2" fill="none"/><path d="M1.500 14q5 0.500 8.500-4q3.500-4.500 8.500-4.500" stroke="#5dbb8b" stroke-width="2" fill="none"/><rect x="7.5" y="1.8" width="1.7" height="1.7" fill="#f0f0f0"/><rect x="7.5" y="3.5" width="1.7" height="1.7" fill="#3c3c3c"/><rect x="7.5" y="5.2" width="1.7" height="1.7" fill="#f0f0f0"/><rect x="9.2" y="1.8" width="1.7" height="1.7" fill="#3c3c3c"/><rect x="9.2" y="3.5" width="1.7" height="1.7" fill="#f0f0f0"/><rect x="9.2" y="5.2" width="1.7" height="1.7" fill="#3c3c3c"/><rect x="10.9" y="1.8" width="1.7" height="1.7" fill="#f0f0f0"/><rect x="10.9" y="3.5" width="1.7" height="1.7" fill="#3c3c3c"/><rect x="10.9" y="5.2" width="1.7" height="1.7" fill="#f0f0f0"/></svg>
<div style="position:absolute;left:0px;top:92px;width:30px;height:456px;background:#444444;"></div>
<div style="position:absolute;left:27.5px;top:92px;width:3px;height:456px;background:#3a3a3a;"></div>
<div style="position:absolute;left:3px;top:96px;width:22px;height:3px;background:repeating-linear-gradient(90deg,#494949 0 1px,#424242 1px 2px);"></div>
<svg style="position:absolute;left:10px;top:104px;" width="12" height="17" viewBox="0 0 12 17"><path d="M1 0l0 13l3.200-2.800l2.400 5.600l2.600-1.200l-2.500-5.300l4.400-0.400z" fill="#c8c8c8"/></svg>
<svg style="position:absolute;left:5px;top:126px;" width="20" height="20" viewBox="0 0 20 20"><ellipse cx="7.8" cy="8.8" rx="8" ry="5" transform="rotate(-35 7.8 8.8)" fill="none" stroke="#3fb6c6" stroke-width="1.5" stroke-dasharray="2.5 1.5"/><path d="M9.2 6.3l0 10.6l2.5-2.1l1.900 4.400l2.100-0.900l-2-4.200l3.500-0.300z" fill="#c8c8c8"/></svg>
<svg style="position:absolute;left:5px;top:150px;" width="20" height="20" viewBox="0 0 20 20"><ellipse cx="7.5" cy="12" rx="8.500" ry="5" transform="rotate(40 7.5 12)" fill="none" stroke="#3fb6c6" stroke-width="1.5" stroke-dasharray="2.5 1.5"/><path d="M18 1.200l1 1l-6.500 7.300l-1.800-1.800z" fill="#c8c8c8"/><path d="M10.500 8l1.800 1.800l-6.800 3z" fill="#e8e8e8"/></svg>
<svg style="position:absolute;left:5px;top:176px;" width="19" height="19" viewBox="0 0 19 19"><rect x="5.500" y="5.500" width="8" height="8" fill="#c8c8c8"/><path d="M9.500 0.500l2.500 3h-5zM9.500 18.500l2.500-3h-5zM0.500 9.500l3-2.500v5zM18.500 9.500l-3-2.500v5z" fill="#3fb6c6"/></svg>
<svg style="position:absolute;left:4.5px;top:199px;" width="20" height="20" viewBox="0 0 20 20"><path d="M10 1.500a8.500 8.500 0 1 0 8.500 8.500" fill="none" stroke="#3fb6c6" stroke-width="1.400"/><path d="M18.500 12.500l-2.200-3.500h4.200z" fill="#3fb6c6"/><path d="M10 4.500l5.500 5.500l-5.500 5.500l-5.500-5.500z" fill="#c8c8c8"/></svg>
<svg style="position:absolute;left:5.5px;top:224px;" width="18" height="18" viewBox="0 0 18 18"><rect x="0.700" y="0.700" width="16" height="16" fill="none" stroke="#3fb6c6" stroke-width="1" stroke-dasharray="2.500 1.500"/><rect x="1" y="9.500" width="7.500" height="7.500" fill="#c8c8c8"/><path d="M9.500 8.500l3.500-3.500" stroke="#3fb6c6" stroke-width="1"/></svg>
<div style="position:absolute;left:3px;top:295.5px;width:23px;height:1.3px;background:#8a8a8a;"></div>
<div style="position:absolute;left:5px;top:303px;width:18.6px;height:18px;background:#c8c8c8;box-shadow:inset 0 0 0 1px #e4e4e4;"></div>
<svg style="position:absolute;left:8.5px;top:306.5px;" width="12" height="11" viewBox="0 0 12 11"><path d="M6 0.500l2.500 2.200l-2.500 2.200l-2.500-2.200zM2.500 3.300l2.500 2.200l-2.500 2.200l-2.500-2.200zM9.500 3.300l2.500 2.200l-2.500 2.200l-2.500-2.200zM6 6.100l2.500 2.200l-2.500 2.200l-2.500-2.200z" fill="#333"/></svg>
<div style="position:absolute;left:5.0px;top:327.0px;width:8.6px;height:8.6px;background:#4a4a4a;box-shadow:inset 0 0 0 0.800px #9a9a9a;"></div>
<div style="position:absolute;left:9.0px;top:329.3px;width:0.8px;height:4.2px;background:#aaa;"></div>
<div style="position:absolute;left:7.2px;top:331.0px;width:4.2px;height:0.8px;background:#aaa;"></div>
<div style="position:absolute;left:5.0px;top:336.4px;width:8.6px;height:8.6px;background:#4a4a4a;box-shadow:inset 0 0 0 0.800px #9a9a9a;"></div>
<div style="position:absolute;left:9.0px;top:338.7px;width:0.8px;height:4.2px;background:#aaa;"></div>
<div style="position:absolute;left:7.2px;top:340.4px;width:4.2px;height:0.8px;background:#aaa;"></div>
<div style="position:absolute;left:14.6px;top:327.0px;width:8.6px;height:8.6px;background:#c8c8c8;"></div>
<svg style="position:absolute;left:16.4px;top:329.3px;" width="5" height="4" viewBox="0 0 5 4"><path d="M2.500 0l2.500 2l-2.500 2l-2.500-2z" fill="#333"/></svg>
<div style="position:absolute;left:14.6px;top:336.4px;width:8.6px;height:8.6px;background:#4a4a4a;box-shadow:inset 0 0 0 0.800px #9a9a9a;"></div>
<div style="position:absolute;left:18.6px;top:338.7px;width:0.8px;height:4.2px;background:#aaa;"></div>
<div style="position:absolute;left:16.8px;top:340.4px;width:4.2px;height:0.8px;background:#aaa;"></div>
<div style="position:absolute;left:5px;top:351px;width:8.6px;height:18.4px;background:#4a4a4a;box-shadow:inset 0 0 0 0.800px #9a9a9a;"></div>
<div style="position:absolute;left:9px;top:358.5px;width:0.8px;height:4px;background:#aaa;"></div>
<div style="position:absolute;left:7.4px;top:360.1px;width:4px;height:0.8px;background:#aaa;"></div>
<div style="position:absolute;left:14.6px;top:351px;width:9px;height:18.4px;background:#c8c8c8;"></div>
<svg style="position:absolute;left:16.6px;top:358px;" width="5" height="4" viewBox="0 0 5 4"><path d="M2.500 0l2.500 2l-2.500 2l-2.500-2z" fill="#333"/></svg>
<div style="position:absolute;left:5px;top:375px;width:18.6px;height:18.6px;background:#4a4a4a;box-shadow:inset 0 0 0 0.800px #9a9a9a;"></div>
<svg style="position:absolute;left:7px;top:377px;" width="15" height="15" viewBox="0 0 15 15"><path d="M2 1v12M2 3h2M2 6.500h3.500M2 10h3.500M2 13h3" stroke="#bbb" stroke-width="0.700" fill="none"/><circle cx="2" cy="1.500" r="1" fill="#ddd"/><circle cx="6" cy="6.500" r="1" fill="#ddd"/><circle cx="6" cy="10" r="1" fill="#ddd"/><circle cx="5.500" cy="13" r="1" fill="#ddd"/><path d="M4.500 3h6M8 6.500h4M8 10h2.500M7.500 13h4" stroke="#ccc" stroke-width="1"/></svg>
<svg style="position:absolute;left:3.5px;top:523.8px;" width="21.8" height="20.2" viewBox="0 0 22 20"><path d="M0 1.500h5v18.500h-5z" fill="#1ea6b0"/><path d="M15.300 0h6.700v20h-5.500v-11l-4.200 8l-2.600-4.500z" fill="#20bfc8"/><path d="M0.500 0h5.500l7.300 14.500l-1.800 4.500l-3.500-3.500z" fill="#9fe0e4"/><path d="M2.500 0h2l6 13l-1.200 1.500z" fill="#d8f4f4" opacity="0.800"/></svg>
<div style="position:absolute;left:30.5px;top:92px;width:814px;height:456px;background:#454545;"></div>
<div style="position:absolute;left:30.5px;top:321.8px;width:404.5px;height:1px;background:#525252;"></div>
<div style="position:absolute;left:438px;top:320px;width:405px;height:1px;background:repeating-linear-gradient(90deg,#5a5a5a 0 1px,#444 1px 2.500px);"></div>
<div style="position:absolute;left:30.5px;top:92.4px;width:404.5px;height:29px;overflow:hidden;">
<div class="t" style="left:6.9px;top:4px;font-size:8px;color:#e8e8e8;">View</div>
<div class="t" style="left:33.1px;top:4px;font-size:8px;color:#e8e8e8;">Shading</div>
<div class="t" style="left:71px;top:4px;font-size:8px;color:#e8e8e8;">Lighting</div>
<div class="t" style="left:109.1px;top:4px;font-size:8px;color:#e8e8e8;">Show</div>
<div class="t" style="left:137.5px;top:4px;font-size:8px;color:#e8e8e8;">Renderer</div>
<div class="t" style="left:178.8px;top:4px;font-size:8px;color:#e8e8e8;">Panels</div>
<div style="position:absolute;left:3.5px;top:16.1px;width:1.6px;height:11px;background:#6c6c6c"></div>
<svg style="position:absolute;left:11.09px;top:17.25px" width="7.83" height="8.70" viewBox="0 0 9.0 10"><rect x="0" y="2.500" width="5.500" height="5" fill="#dedede"/><path d="M6 5l3-2.500v5z" fill="#dedede"/></svg>
<svg style="position:absolute;left:24.59px;top:17.25px" width="7.83" height="8.70" viewBox="0 0 9 10"><rect x="0.500" y="2" width="4.500" height="4" fill="#dedede"/><path d="M5.500 4l3-2v4.500z" fill="#dedede"/><rect x="1" y="5.500" width="3.500" height="4" fill="#3fb6c6"/></svg>
<svg style="position:absolute;left:21.8px;top:15.3px" width="13" height="12.600" viewBox="0 0 13 12.600"><path d="M3 0.800h-2.200v11h2.200M10 0.800h2.200v11h-2.200" fill="none" stroke="#2fc214" stroke-width="1.700"/></svg>
<svg style="position:absolute;left:37.74px;top:17.25px" width="7.22" height="8.70" viewBox="0 0 8.299999999999997 10"><path d="M2 2h4v2" fill="none" stroke="#dedede" stroke-width="1"/><path d="M5.500 4l3-2v4.500z" fill="#dedede"/><circle cx="2.800" cy="6.500" r="2.200" fill="none" stroke="#3fb6c6" stroke-width="1.100"/></svg>
<svg style="position:absolute;left:51.83px;top:17.25px" width="4.35" height="8.70" viewBox="0 0 5.0 10"><path d="M0 0.500h5v8.500l-2.500-2.500l-2.500 2.500z" fill="#dedede"/></svg>
<svg style="position:absolute;left:63.12px;top:17.25px" width="8.27" height="8.70" viewBox="0 0 9.5 10"><path d="M0 9.500l4.500-9v9z" fill="#3fb6c6"/><path d="M5 9.500l4.500-4.500h-4.500z" fill="#999"/><path d="M4.500 0.500l1.500 1v8h-1.500z" fill="#2a8f9c"/></svg>
<svg style="position:absolute;left:76.12px;top:17.25px" width="8.27" height="8.70" viewBox="0 0 9.5 10"><path d="M4 0.500v5M1.500 3h5" stroke="#dedede" stroke-width="1.100"/><path d="M3 6h6v3.500h-4z" fill="#3fb6c6"/></svg>
<svg style="position:absolute;left:88.62px;top:17.25px" width="8.27" height="8.70" viewBox="0 0 9.5 10"><path d="M8.500 0.500l1 1l-5.500 6l-1.800-1.200z" fill="#dedede"/><path d="M0.500 9.500q3-1 4-3" stroke="#3fb6c6" stroke-width="1" fill="none"/><path d="M5 9.500h4" stroke="#dedede" stroke-width="0.800"/></svg>
<div style="position:absolute;left:101.2px;top:16.1px;width:1.6px;height:11px;background:#6c6c6c"></div>
<div style="position:absolute;left:106.8px;top:15.400000000000002px;width:12.5px;height:12.4px;background:#4a7db0;box-shadow:inset 0 0 0 1.2px #5b9bd5"></div>
<svg style="position:absolute;left:108.48px;top:17.25px" width="9.13" height="8.70" viewBox="0 0 10.5 10"><rect x="0.500" y="0.500" width="9.500" height="9" fill="#47525e"/><path d="M0.500 0.500h9.500v9h-9.500zM3 0.500v9M5.250 0.500v9M7.500 0.500v9M0.500 2.800h9.500M0.500 5h9.500M0.500 7.200h9.500" stroke="#e0e0e0" stroke-width="0.800" fill="none"/></svg>
<svg style="position:absolute;left:121.65px;top:17.25px" width="8.70" height="8.70" viewBox="0 0 10 10"><rect x="0.500" y="1.500" width="9" height="7" fill="#333" stroke="#dedede" stroke-width="1"/><path d="M0.500 1.500h9" stroke="#dedede" stroke-width="1.600" stroke-dasharray="1.200 0.800"/></svg>
<svg style="position:absolute;left:134.65px;top:17.25px" width="8.70" height="8.70" viewBox="0 0 10 10"><rect x="0.500" y="1.500" width="9" height="7" fill="none" stroke="#dedede" stroke-width="1"/><circle cx="5" cy="5" r="2" fill="#3fb6c6"/></svg>
<div style="position:absolute;left:146.5px;top:15.900000000000002px;width:11.5px;height:11.4px;background:#4a4a4a;box-shadow:inset 0 0 0 0.8px #585858;border-radius:1px"></div>
<svg style="position:absolute;left:148.12px;top:17.25px" width="8.27" height="8.70" viewBox="0 0 9.5 10"><rect x="2.500" y="2.500" width="4.500" height="4.500" fill="#4a4a4a"/></svg>
<svg style="position:absolute;left:160.65px;top:17.25px" width="8.70" height="8.70" viewBox="0 0 10 10"><rect x="0.500" y="1.500" width="9" height="7" fill="none" stroke="#dedede" stroke-width="1"/><path d="M5 1.500v7M0.500 5h9" stroke="#3fb6c6" stroke-width="0.900"/></svg>
<svg style="position:absolute;left:174.12px;top:17.25px" width="8.27" height="8.70" viewBox="0 0 9.5 10"><rect x="0.500" y="1.500" width="8.500" height="7" fill="none" stroke="#dedede" stroke-width="1"/><circle cx="3.500" cy="6" r="1.200" fill="#3fb6c6"/><circle cx="6" cy="4" r="1.200" fill="#3fb6c6"/></svg>
<svg style="position:absolute;left:186.65px;top:17.25px" width="8.70" height="8.70" viewBox="0 0 10 10"><rect x="0.500" y="1.500" width="9" height="7" fill="none" stroke="#dedede" stroke-width="1"/><path d="M3 3.500h4M5 3.500v3.500" stroke="#3fb6c6" stroke-width="1.300"/></svg>
<div style="position:absolute;left:199.7px;top:16.1px;width:1.6px;height:11px;background:#6c6c6c"></div>
<svg style="position:absolute;left:207.59px;top:17.25px" width="7.83" height="8.70" viewBox="0 0 9 10"><circle cx="4.500" cy="5" r="4" fill="none" stroke="#3fb6c6" stroke-width="1.200"/><path d="M4.500 5v4M4.500 5l-3-2.500M4.500 5l3-2.500" stroke="#3fb6c6" stroke-width="1"/></svg>
<div style="position:absolute;left:218px;top:15.400000000000002px;width:12.5px;height:12.4px;background:#4a7db0;box-shadow:inset 0 0 0 1.2px #5b9bd5"></div>
<svg style="position:absolute;left:219.68px;top:17.25px" width="9.13" height="8.70" viewBox="0 0 10.5 10"><path d="M5.250 0.300l4.500 2.400v4.800l-4.500 2.400l-4.500-2.400v-4.800z" fill="#d0c8c0"/><path d="M0.750 2.700l4.500 2.400l4.500-2.400M5.250 5.100v4.800" stroke="#6a6058" stroke-width="0.900" fill="none"/></svg>
<svg style="position:absolute;left:233.55px;top:17.25px" width="7.39" height="8.70" viewBox="0 0 8.5 10"><path d="M4 0.500a4.500 4.500 0 0 0 0 9z" fill="#e0e0e0"/><path d="M5 1.500h1.500v1.500h-1.500zM6.500 3h1.500v1.500h-1.500zM5 4.500h1.500v1.500h-1.500zM6.500 6h1.500v1.500h-1.500zM5 7.500h1.500v1.500h-1.500z" fill="#e0e0e0"/></svg>
<svg style="position:absolute;left:246.32px;top:17.25px" width="8.35" height="8.70" viewBox="0 0 9.600000000000023 10"><path d="M4.800 0.300l4.300 2.400v4.600l-4.300 2.400l-4.300-2.400v-4.600z" fill="#3fb6c6" opacity="0.850"/><path d="M0.500 2.700l4.300 2.300l4.300-2.300M4.800 5v4.700M2.600 1.500v6.800M7 1.500v6.800" stroke="#1d6f7a" stroke-width="0.700" fill="none"/></svg>
<svg style="position:absolute;left:260.05px;top:17.25px" width="7.39" height="8.70" viewBox="0 0 8.5 10"><rect x="0.5" y="1.0" width="1.900" height="1.900" fill="#eee"/><rect x="0.5" y="4.8" width="1.900" height="1.900" fill="#eee"/><rect x="2.4" y="2.9" width="1.900" height="1.900" fill="#eee"/><rect x="2.4" y="6.699999999999999" width="1.900" height="1.900" fill="#eee"/><rect x="4.3" y="1.0" width="1.900" height="1.900" fill="#eee"/><rect x="4.3" y="4.8" width="1.900" height="1.900" fill="#eee"/><rect x="6.199999999999999" y="2.9" width="1.900" height="1.900" fill="#eee"/><rect x="6.199999999999999" y="6.699999999999999" width="1.900" height="1.900" fill="#eee"/></svg>
<svg style="position:absolute;left:272.58px;top:17.25px" width="7.83" height="8.70" viewBox="0 0 9 10"><circle cx="4.500" cy="4" r="2.400" fill="#e8e8e8"/><rect x="3.500" y="6" width="2" height="2.500" fill="#ddd"/><path d="M4.500 0v0.800M0.300 4h1M7.700 4h1M1.500 1l0.700 0.700M7.500 1l-0.700 0.700" stroke="#ddd" stroke-width="0.700"/></svg>
<svg style="position:absolute;left:285.40px;top:17.25px" width="8.00" height="8.70" viewBox="0 0 9.199999999999989 10"><circle cx="6" cy="4.500" r="2.800" fill="#3f6a72"/><ellipse cx="3.500" cy="7.500" rx="3" ry="1.300" fill="#4a6a70"/></svg>
<div style="position:absolute;left:297.9px;top:16.1px;width:1.6px;height:11px;background:#6c6c6c"></div>
<svg style="position:absolute;left:305.58px;top:17.25px" width="7.83" height="8.70" viewBox="0 0 9 10"><path d="M0.500 5a4 4 0 0 1 8 0z" fill="#e0e0e0"/><path d="M0.500 5.500a4 4 0 0 0 8 0z" fill="#aaa"/><ellipse cx="4.500" cy="8.300" rx="4" ry="1.300" fill="none" stroke="#3fb6c6" stroke-width="1"/></svg>
<svg style="position:absolute;left:318.37px;top:17.25px" width="8.96" height="8.70" viewBox="0 0 10.300000000000011 10"><rect x="0" y="2" width="7" height="6" rx="3" fill="#999"/><circle cx="6.500" cy="5" r="3.200" fill="#e6e6e6"/></svg>
<svg style="position:absolute;left:332.08px;top:17.25px" width="7.83" height="8.70" viewBox="0 0 9.0 10"><circle cx="4.500" cy="5" r="3.600" fill="none" stroke="#e0e0e0" stroke-width="1.300"/><path d="M4.500 1.400a3.600 3.600 0 0 1 3.600 3.600" fill="none" stroke="#3fb6c6" stroke-width="1.300"/><path d="M4.500 8.600a3.600 3.600 0 0 1-3.600-3.600" fill="none" stroke="#3fb6c6" stroke-width="1.300"/></svg>
<div style="position:absolute;left:343.5px;top:15.900000000000002px;width:12.0px;height:11.4px;background:#4a4a4a;box-shadow:inset 0 0 0 0.8px #585858;border-radius:1px"></div>
<svg style="position:absolute;left:345.15px;top:17.25px" width="8.70" height="8.70" viewBox="0 0 10.0 10"><rect x="1.500" y="2" width="3" height="6" fill="#3f5f66"/><rect x="5.500" y="3.500" width="3" height="4.500" fill="#3f5f66"/></svg>
<div style="position:absolute;left:357.2px;top:16.1px;width:1.6px;height:11px;background:#6c6c6c"></div>
<svg style="position:absolute;left:364.68px;top:17.25px" width="9.13" height="8.70" viewBox="0 0 10.5 10"><path d="M0.500 1.500h6M0.500 3.500h6M0.500 5.500h4M1.500 0.500v6M3.500 0.500v6M5.500 0.500v4" stroke="#3fb6c6" stroke-width="0.700"/><path d="M5.500 3l0 6l1.500-1.200l1 2.200l1-0.500l-1-2.100l2-0.200z" fill="#e4e4e4"/></svg>
<div style="position:absolute;left:377.5px;top:16.1px;width:1.6px;height:11px;background:#6c6c6c"></div>
<svg style="position:absolute;left:385.08px;top:17.25px" width="7.83" height="8.70" viewBox="0 0 9.0 10"><rect x="2.500" y="0.500" width="6" height="6" fill="none" stroke="#e8e8e8" stroke-width="1.200"/><rect x="0.600" y="3" width="6" height="6" fill="#444" stroke="#e8e8e8" stroke-width="1.200"/></svg>
<svg style="position:absolute;left:397.58px;top:17.25px" width="7.83" height="8.70" viewBox="0 0 9 10"><path d="M1 2v7h7" stroke="#3fb6c6" stroke-width="2" fill="none"/><rect x="3.500" y="0.500" width="5" height="5" fill="none" stroke="#ddd" stroke-width="0.800"/></svg>
</div>
<div style="position:absolute;left:32px;top:121px;width:402px;height:198px;overflow:hidden;background:#5f5f5f;">
<svg width="402" height="198" viewBox="0 0 402 198" style="position:absolute;left:0;top:0"><path d="M1.50 0v198.0M9.50 0v198.0M17.50 0v198.0M25.50 0v198.0M32.50 0v198.0M40.50 0v198.0M48.50 0v198.0M56.50 0v198.0M64.50 0v198.0M72.50 0v198.0M79.50 0v198.0M87.50 0v198.0M95.50 0v198.0M103.50 0v198.0M111.50 0v198.0M119.50 0v198.0M126.50 0v198.0M134.50 0v198.0M142.50 0v198.0M150.50 0v198.0M158.50 0v198.0M166.50 0v198.0M173.50 0v198.0M181.50 0v198.0M189.50 0v198.0M197.50 0v198.0M205.50 0v198.0M213.50 0v198.0M221.50 0v198.0M228.50 0v198.0M236.50 0v198.0M244.50 0v198.0M252.50 0v198.0M260.50 0v198.0M268.50 0v198.0M275.50 0v198.0M283.50 0v198.0M291.50 0v198.0M299.50 0v198.0M307.50 0v198.0M315.50 0v198.0M322.50 0v198.0M330.50 0v198.0M338.50 0v198.0M346.50 0v198.0M354.50 0v198.0M362.50 0v198.0M369.50 0v198.0M377.50 0v198.0M385.50 0v198.0M393.50 0v198.0M401.50 0v198.0M0 4.50h402.0M0 12.50h402.0M0 20.50h402.0M0 28.50h402.0M0 35.50h402.0M0 43.50h402.0M0 51.50h402.0M0 59.50h402.0M0 67.50h402.0M0 75.50h402.0M0 82.50h402.0M0 90.50h402.0M0 98.50h402.0M0 106.50h402.0M0 114.50h402.0M0 122.50h402.0M0 130.50h402.0M0 137.50h402.0M0 145.50h402.0M0 153.50h402.0M0 161.50h402.0M0 169.50h402.0M0 177.50h402.0M0 184.50h402.0M0 192.50h402.0" stroke="#ffffff" stroke-width="3" opacity="0.05" fill="none"/><path d="M1.50 0v198.0M9.50 0v198.0M17.50 0v198.0M25.50 0v198.0M32.50 0v198.0M40.50 0v198.0M48.50 0v198.0M56.50 0v198.0M64.50 0v198.0M72.50 0v198.0M79.50 0v198.0M87.50 0v198.0M95.50 0v198.0M103.50 0v198.0M111.50 0v198.0M119.50 0v198.0M126.50 0v198.0M134.50 0v198.0M142.50 0v198.0M150.50 0v198.0M158.50 0v198.0M166.50 0v198.0M173.50 0v198.0M181.50 0v198.0M189.50 0v198.0M197.50 0v198.0M205.50 0v198.0M213.50 0v198.0M221.50 0v198.0M228.50 0v198.0M236.50 0v198.0M244.50 0v198.0M252.50 0v198.0M260.50 0v198.0M268.50 0v198.0M275.50 0v198.0M283.50 0v198.0M291.50 0v198.0M299.50 0v198.0M307.50 0v198.0M315.50 0v198.0M322.50 0v198.0M330.50 0v198.0M338.50 0v198.0M346.50 0v198.0M354.50 0v198.0M362.50 0v198.0M369.50 0v198.0M377.50 0v198.0M385.50 0v198.0M393.50 0v198.0M401.50 0v198.0M0 4.50h402.0M0 12.50h402.0M0 20.50h402.0M0 28.50h402.0M0 35.50h402.0M0 43.50h402.0M0 51.50h402.0M0 59.50h402.0M0 67.50h402.0M0 75.50h402.0M0 82.50h402.0M0 90.50h402.0M0 98.50h402.0M0 106.50h402.0M0 114.50h402.0M0 122.50h402.0M0 130.50h402.0M0 137.50h402.0M0 145.50h402.0M0 153.50h402.0M0 161.50h402.0M0 169.50h402.0M0 177.50h402.0M0 184.50h402.0M0 192.50h402.0" stroke="#9c9c9c" stroke-width="1" opacity="1" fill="none"/><rect x="103.00" y="4.00" width="188.50" height="188.30" fill="#ababab"/><svg x="103.00" y="4.00" width="188.50" height="188.30" viewBox="103.00 4.00 188.50 188.30" overflow="hidden"><path d="M1.50 0v198.0M9.50 0v198.0M17.50 0v198.0M25.50 0v198.0M32.50 0v198.0M40.50 0v198.0M48.50 0v198.0M56.50 0v198.0M64.50 0v198.0M72.50 0v198.0M79.50 0v198.0M87.50 0v198.0M95.50 0v198.0M103.50 0v198.0M111.50 0v198.0M119.50 0v198.0M126.50 0v198.0M134.50 0v198.0M142.50 0v198.0M150.50 0v198.0M158.50 0v198.0M166.50 0v198.0M173.50 0v198.0M181.50 0v198.0M189.50 0v198.0M197.50 0v198.0M205.50 0v198.0M213.50 0v198.0M221.50 0v198.0M228.50 0v198.0M236.50 0v198.0M244.50 0v198.0M252.50 0v198.0M260.50 0v198.0M268.50 0v198.0M275.50 0v198.0M283.50 0v198.0M291.50 0v198.0M299.50 0v198.0M307.50 0v198.0M315.50 0v198.0M322.50 0v198.0M330.50 0v198.0M338.50 0v198.0M346.50 0v198.0M354.50 0v198.0M362.50 0v198.0M369.50 0v198.0M377.50 0v198.0M385.50 0v198.0M393.50 0v198.0M401.50 0v198.0M0 4.50h402.0M0 12.50h402.0M0 20.50h402.0M0 28.50h402.0M0 35.50h402.0M0 43.50h402.0M0 51.50h402.0M0 59.50h402.0M0 67.50h402.0M0 75.50h402.0M0 82.50h402.0M0 90.50h402.0M0 98.50h402.0M0 106.50h402.0M0 114.50h402.0M0 122.50h402.0M0 130.50h402.0M0 137.50h402.0M0 145.50h402.0M0 153.50h402.0M0 161.50h402.0M0 169.50h402.0M0 177.50h402.0M0 184.50h402.0M0 192.50h402.0" stroke="#ffffff" stroke-width="3" opacity="0.011000000000000001" fill="none"/><path d="M1.50 0v198.0M9.50 0v198.0M17.50 0v198.0M25.50 0v198.0M32.50 0v198.0M40.50 0v198.0M48.50 0v198.0M56.50 0v198.0M64.50 0v198.0M72.50 0v198.0M79.50 0v198.0M87.50 0v198.0M95.50 0v198.0M103.50 0v198.0M111.50 0v198.0M119.50 0v198.0M126.50 0v198.0M134.50 0v198.0M142.50 0v198.0M150.50 0v198.0M158.50 0v198.0M166.50 0v198.0M173.50 0v198.0M181.50 0v198.0M189.50 0v198.0M197.50 0v198.0M205.50 0v198.0M213.50 0v198.0M221.50 0v198.0M228.50 0v198.0M236.50 0v198.0M244.50 0v198.0M252.50 0v198.0M260.50 0v198.0M268.50 0v198.0M275.50 0v198.0M283.50 0v198.0M291.50 0v198.0M299.50 0v198.0M307.50 0v198.0M315.50 0v198.0M322.50 0v198.0M330.50 0v198.0M338.50 0v198.0M346.50 0v198.0M354.50 0v198.0M362.50 0v198.0M369.50 0v198.0M377.50 0v198.0M385.50 0v198.0M393.50 0v198.0M401.50 0v198.0M0 4.50h402.0M0 12.50h402.0M0 20.50h402.0M0 28.50h402.0M0 35.50h402.0M0 43.50h402.0M0 51.50h402.0M0 59.50h402.0M0 67.50h402.0M0 75.50h402.0M0 82.50h402.0M0 90.50h402.0M0 98.50h402.0M0 106.50h402.0M0 114.50h402.0M0 122.50h402.0M0 130.50h402.0M0 137.50h402.0M0 145.50h402.0M0 153.50h402.0M0 161.50h402.0M0 169.50h402.0M0 177.50h402.0M0 184.50h402.0M0 192.50h402.0" stroke="#989898" stroke-width="1" opacity="0.22" fill="none"/></svg><path d="M197.5 0v198M0 98.5h402" stroke="#1c1c1c" stroke-width="1.100"/><circle cx="232.10000000000002" cy="98.80000000000001" r="7.8" fill="#40ec8e"/><circle cx="232.10000000000002" cy="98.80000000000001" r="4.29" fill="#62dc9c" opacity="0.600"/></svg>
</div>
<svg style="position:absolute;left:49.2px;top:302px" width="1" height="1" viewBox="0 0 1 1"><path d="M0 0h8" stroke="#e02020" stroke-width="0.900"/><path d="M0 0v5" stroke="#2030ff" stroke-width="0.900"/><text x="10.5" y="-0.8" font-size="4.500" font-weight="bold" fill="#e02020" text-anchor="middle" font-family="Liberation Sans, sans-serif">x</text><text x="0" y="-0.8" font-size="4.500" font-weight="bold" fill="#20d020" text-anchor="middle" font-family="Liberation Sans, sans-serif">Y</text><text x="0" y="8.6" font-size="4.500" font-weight="bold" fill="#2030ff" text-anchor="middle" font-family="Liberation Sans, sans-serif">z</text></svg>
<div class="t" style="transform-origin:50% 50%;left:200.5px;top:305.3px;width:60px;text-align:center;font-size:7.2px;font-weight:bold;color:#17651f;-webkit-text-stroke:0">top -Y</div>
<div style="position:absolute;left:436.5px;top:92.4px;width:405.5px;height:29px;overflow:hidden;">
<div class="t" style="left:6.9px;top:4px;font-size:8px;color:#e8e8e8;">View</div>
<div class="t" style="left:33.1px;top:4px;font-size:8px;color:#e8e8e8;">Shading</div>
<div class="t" style="left:71px;top:4px;font-size:8px;color:#e8e8e8;">Lighting</div>
<div class="t" style="left:109.1px;top:4px;font-size:8px;color:#e8e8e8;">Show</div>
<div class="t" style="left:137.5px;top:4px;font-size:8px;color:#e8e8e8;">Renderer</div>
<div class="t" style="left:178.8px;top:4px;font-size:8px;color:#e8e8e8;">Panels</div>
<div style="position:absolute;left:3.5px;top:16.1px;width:1.6px;height:11px;background:#6c6c6c"></div>
<svg style="position:absolute;left:11.09px;top:17.25px" width="7.83" height="8.70" viewBox="0 0 9.0 10"><rect x="0" y="2.500" width="5.500" height="5" fill="#dedede"/><path d="M6 5l3-2.500v5z" fill="#dedede"/></svg>
<svg style="position:absolute;left:24.59px;top:17.25px" width="7.83" height="8.70" viewBox="0 0 9 10"><rect x="0.500" y="2" width="4.500" height="4" fill="#dedede"/><path d="M5.500 4l3-2v4.500z" fill="#dedede"/><rect x="1" y="5.500" width="3.500" height="4" fill="#3fb6c6"/></svg>
<svg style="position:absolute;left:21.8px;top:15.3px" width="13" height="12.600" viewBox="0 0 13 12.600"><path d="M3 0.800h-2.200v11h2.200M10 0.800h2.200v11h-2.200" fill="none" stroke="#2fc214" stroke-width="1.700"/></svg>
<svg style="position:absolute;left:37.74px;top:17.25px" width="7.22" height="8.70" viewBox="0 0 8.299999999999997 10"><path d="M2 2h4v2" fill="none" stroke="#dedede" stroke-width="1"/><path d="M5.500 4l3-2v4.500z" fill="#dedede"/><circle cx="2.800" cy="6.500" r="2.200" fill="none" stroke="#3fb6c6" stroke-width="1.100"/></svg>
<svg style="position:absolute;left:51.83px;top:17.25px" width="4.35" height="8.70" viewBox="0 0 5.0 10"><path d="M0 0.500h5v8.500l-2.500-2.500l-2.500 2.500z" fill="#dedede"/></svg>
<svg style="position:absolute;left:63.12px;top:17.25px" width="8.27" height="8.70" viewBox="0 0 9.5 10"><path d="M0 9.500l4.500-9v9z" fill="#3fb6c6"/><path d="M5 9.500l4.500-4.500h-4.500z" fill="#999"/><path d="M4.500 0.500l1.500 1v8h-1.500z" fill="#2a8f9c"/></svg>
<svg style="position:absolute;left:76.12px;top:17.25px" width="8.27" height="8.70" viewBox="0 0 9.5 10"><path d="M4 0.500v5M1.500 3h5" stroke="#dedede" stroke-width="1.100"/><path d="M3 6h6v3.500h-4z" fill="#3fb6c6"/></svg>
<svg style="position:absolute;left:88.62px;top:17.25px" width="8.27" height="8.70" viewBox="0 0 9.5 10"><path d="M8.500 0.500l1 1l-5.500 6l-1.800-1.200z" fill="#dedede"/><path d="M0.500 9.500q3-1 4-3" stroke="#3fb6c6" stroke-width="1" fill="none"/><path d="M5 9.500h4" stroke="#dedede" stroke-width="0.800"/></svg>
<div style="position:absolute;left:101.2px;top:16.1px;width:1.6px;height:11px;background:#6c6c6c"></div>
<div style="position:absolute;left:106.8px;top:15.400000000000002px;width:12.5px;height:12.4px;background:#4a7db0;box-shadow:inset 0 0 0 1.2px #5b9bd5"></div>
<svg style="position:absolute;left:108.48px;top:17.25px" width="9.13" height="8.70" viewBox="0 0 10.5 10"><rect x="0.500" y="0.500" width="9.500" height="9" fill="#47525e"/><path d="M0.500 0.500h9.500v9h-9.500zM3 0.500v9M5.250 0.500v9M7.500 0.500v9M0.500 2.800h9.500M0.500 5h9.500M0.500 7.200h9.500" stroke="#e0e0e0" stroke-width="0.800" fill="none"/></svg>
<svg style="position:absolute;left:121.65px;top:17.25px" width="8.70" height="8.70" viewBox="0 0 10 10"><rect x="0.500" y="1.500" width="9" height="7" fill="#333" stroke="#dedede" stroke-width="1"/><path d="M0.500 1.500h9" stroke="#dedede" stroke-width="1.600" stroke-dasharray="1.200 0.800"/></svg>
<svg style="position:absolute;left:134.65px;top:17.25px" width="8.70" height="8.70" viewBox="0 0 10 10"><rect x="0.500" y="1.500" width="9" height="7" fill="none" stroke="#dedede" stroke-width="1"/><circle cx="5" cy="5" r="2" fill="#3fb6c6"/></svg>
<div style="position:absolute;left:146.5px;top:15.900000000000002px;width:11.5px;height:11.4px;background:#4a4a4a;box-shadow:inset 0 0 0 0.8px #585858;border-radius:1px"></div>
<svg style="position:absolute;left:148.12px;top:17.25px" width="8.27" height="8.70" viewBox="0 0 9.5 10"><rect x="2.500" y="2.500" width="4.500" height="4.500" fill="#4a4a4a"/></svg>
<svg style="position:absolute;left:160.65px;top:17.25px" width="8.70" height="8.70" viewBox="0 0 10 10"><rect x="0.500" y="1.500" width="9" height="7" fill="none" stroke="#dedede" stroke-width="1"/><path d="M5 1.500v7M0.500 5h9" stroke="#3fb6c6" stroke-width="0.900"/></svg>
<svg style="position:absolute;left:174.12px;top:17.25px" width="8.27" height="8.70" viewBox="0 0 9.5 10"><rect x="0.500" y="1.500" width="8.500" height="7" fill="none" stroke="#dedede" stroke-width="1"/><circle cx="3.500" cy="6" r="1.200" fill="#3fb6c6"/><circle cx="6" cy="4" r="1.200" fill="#3fb6c6"/></svg>
<svg style="position:absolute;left:186.65px;top:17.25px" width="8.70" height="8.70" viewBox="0 0 10 10"><rect x="0.500" y="1.500" width="9" height="7" fill="none" stroke="#dedede" stroke-width="1"/><path d="M3 3.500h4M5 3.500v3.500" stroke="#3fb6c6" stroke-width="1.300"/></svg>
<div style="position:absolute;left:199.7px;top:16.1px;width:1.6px;height:11px;background:#6c6c6c"></div>
<svg style="position:absolute;left:207.59px;top:17.25px" width="7.83" height="8.70" viewBox="0 0 9 10"><circle cx="4.500" cy="5" r="4" fill="none" stroke="#3fb6c6" stroke-width="1.200"/><path d="M4.500 5v4M4.500 5l-3-2.500M4.500 5l3-2.500" stroke="#3fb6c6" stroke-width="1"/></svg>
<div style="position:absolute;left:218px;top:15.400000000000002px;width:12.5px;height:12.4px;background:#4a7db0;box-shadow:inset 0 0 0 1.2px #5b9bd5"></div>
<svg style="position:absolute;left:219.68px;top:17.25px" width="9.13" height="8.70" viewBox="0 0 10.5 10"><path d="M5.250 0.300l4.500 2.400v4.800l-4.500 2.400l-4.500-2.400v-4.800z" fill="#d0c8c0"/><path d="M0.750 2.700l4.500 2.400l4.500-2.400M5.250 5.100v4.800" stroke="#6a6058" stroke-width="0.900" fill="none"/></svg>
<svg style="position:absolute;left:233.55px;top:17.25px" width="7.39" height="8.70" viewBox="0 0 8.5 10"><path d="M4 0.500a4.500 4.500 0 0 0 0 9z" fill="#e0e0e0"/><path d="M5 1.500h1.500v1.500h-1.500zM6.500 3h1.500v1.500h-1.500zM5 4.500h1.500v1.500h-1.500zM6.500 6h1.500v1.500h-1.500zM5 7.500h1.500v1.500h-1.500z" fill="#e0e0e0"/></svg>
<svg style="position:absolute;left:246.32px;top:17.25px" width="8.35" height="8.70" viewBox="0 0 9.600000000000023 10"><path d="M4.800 0.300l4.300 2.400v4.600l-4.300 2.400l-4.300-2.400v-4.600z" fill="#3fb6c6" opacity="0.850"/><path d="M0.500 2.700l4.300 2.300l4.300-2.300M4.800 5v4.700M2.600 1.500v6.800M7 1.500v6.800" stroke="#1d6f7a" stroke-width="0.700" fill="none"/></svg>
<svg style="position:absolute;left:260.05px;top:17.25px" width="7.39" height="8.70" viewBox="0 0 8.5 10"><rect x="0.5" y="1.0" width="1.900" height="1.900" fill="#eee"/><rect x="0.5" y="4.8" width="1.900" height="1.900" fill="#eee"/><rect x="2.4" y="2.9" width="1.900" height="1.900" fill="#eee"/><rect x="2.4" y="6.699999999999999" width="1.900" height="1.900" fill="#eee"/><rect x="4.3" y="1.0" width="1.900" height="1.900" fill="#eee"/><rect x="4.3" y="4.8" width="1.900" height="1.900" fill="#eee"/><rect x="6.199999999999999" y="2.9" width="1.900" height="1.900" fill="#eee"/><rect x="6.199999999999999" y="6.699999999999999" width="1.900" height="1.900" fill="#eee"/></svg>
<svg style="position:absolute;left:272.58px;top:17.25px" width="7.83" height="8.70" viewBox="0 0 9 10"><circle cx="4.500" cy="4" r="2.400" fill="#e8e8e8"/><rect x="3.500" y="6" width="2" height="2.500" fill="#ddd"/><path d="M4.500 0v0.800M0.300 4h1M7.700 4h1M1.500 1l0.700 0.700M7.500 1l-0.700 0.700" stroke="#ddd" stroke-width="0.700"/></svg>
<svg style="position:absolute;left:285.40px;top:17.25px" width="8.00" height="8.70" viewBox="0 0 9.199999999999989 10"><circle cx="6" cy="4.500" r="2.800" fill="#3fb6c6"/><ellipse cx="3.500" cy="7.500" rx="3" ry="1.300" fill="#9adbe4"/></svg>
<div style="position:absolute;left:297.9px;top:16.1px;width:1.6px;height:11px;background:#6c6c6c"></div>
<svg style="position:absolute;left:305.58px;top:17.25px" width="7.83" height="8.70" viewBox="0 0 9 10"><path d="M0.500 5a4 4 0 0 1 8 0z" fill="#e0e0e0"/><path d="M0.500 5.500a4 4 0 0 0 8 0z" fill="#aaa"/><ellipse cx="4.500" cy="8.300" rx="4" ry="1.300" fill="none" stroke="#3fb6c6" stroke-width="1"/></svg>
<svg style="position:absolute;left:318.37px;top:17.25px" width="8.96" height="8.70" viewBox="0 0 10.300000000000011 10"><rect x="0" y="2" width="7" height="6" rx="3" fill="#999"/><circle cx="6.500" cy="5" r="3.200" fill="#e6e6e6"/></svg>
<svg style="position:absolute;left:332.08px;top:17.25px" width="7.83" height="8.70" viewBox="0 0 9.0 10"><circle cx="4.500" cy="5" r="3.600" fill="none" stroke="#e0e0e0" stroke-width="1.300"/><path d="M4.500 1.400a3.600 3.600 0 0 1 3.600 3.600" fill="none" stroke="#3fb6c6" stroke-width="1.300"/><path d="M4.500 8.600a3.600 3.600 0 0 1-3.600-3.600" fill="none" stroke="#3fb6c6" stroke-width="1.300"/></svg>
<div style="position:absolute;left:343.5px;top:15.900000000000002px;width:12.0px;height:11.4px;background:#4a4a4a;box-shadow:inset 0 0 0 0.8px #585858;border-radius:1px"></div>
<svg style="position:absolute;left:345.15px;top:17.25px" width="8.70" height="8.70" viewBox="0 0 10.0 10"><rect x="1.500" y="2" width="3" height="6" fill="#3f5f66"/><rect x="5.500" y="3.500" width="3" height="4.500" fill="#3f5f66"/></svg>
<div style="position:absolute;left:357.2px;top:16.1px;width:1.6px;height:11px;background:#6c6c6c"></div>
<svg style="position:absolute;left:364.68px;top:17.25px" width="9.13" height="8.70" viewBox="0 0 10.5 10"><path d="M0.500 1.500h6M0.500 3.500h6M0.500 5.500h4M1.500 0.500v6M3.500 0.500v6M5.500 0.500v4" stroke="#3fb6c6" stroke-width="0.700"/><path d="M5.500 3l0 6l1.500-1.200l1 2.200l1-0.500l-1-2.100l2-0.200z" fill="#e4e4e4"/></svg>
<div style="position:absolute;left:377.5px;top:16.1px;width:1.6px;height:11px;background:#6c6c6c"></div>
<svg style="position:absolute;left:385.08px;top:17.25px" width="7.83" height="8.70" viewBox="0 0 9.0 10"><rect x="2.500" y="0.500" width="6" height="6" fill="none" stroke="#e8e8e8" stroke-width="1.200"/><rect x="0.600" y="3" width="6" height="6" fill="#444" stroke="#e8e8e8" stroke-width="1.200"/></svg>
<svg style="position:absolute;left:397.58px;top:17.25px" width="7.83" height="8.70" viewBox="0 0 9 10"><path d="M1 2v7h7" stroke="#3fb6c6" stroke-width="2" fill="none"/><rect x="3.500" y="0.500" width="5" height="5" fill="none" stroke="#ddd" stroke-width="0.800"/></svg>
</div>
<div style="position:absolute;left:439px;top:121px;width:402px;height:197px;overflow:hidden;background:#5f5f5f;">
<svg width="402" height="197" viewBox="0 0 402 197" style="position:absolute;left:0;top:0"><path d="M113.79999999999995 58L270 47.19999999999999L328.29999999999995 165.2L104.39999999999998 187.7z" fill="#a1a1a1"/><path d="M194.20000000000005 52.599999999999994L219.70000000000005 177M109.20000000000005 110.80000000000001L293.4 94.69999999999999" stroke="#262626" stroke-width="0.950"/><circle cx="239" cy="85.30000000000001" r="8.6" fill="#40ec8e"/><circle cx="239" cy="85.30000000000001" r="4.73" fill="#62dc9c" opacity="0.600"/></svg>
</div>
<svg style="position:absolute;left:455.6px;top:302.4px" width="1" height="1" viewBox="0 0 1 1"><path d="M0 0l8.300-1.100" stroke="#e02020" stroke-width="0.900"/><path d="M0 0v-7" stroke="#20d020" stroke-width="0.900"/><path d="M0 0l0.700 2" stroke="#2030ff" stroke-width="1.200"/><text x="9.7" y="-2.7" font-size="4.500" font-weight="bold" fill="#e02020" text-anchor="middle" font-family="Liberation Sans, sans-serif">x</text><text x="0" y="-9" font-size="4.500" font-weight="bold" fill="#20d020" text-anchor="middle" font-family="Liberation Sans, sans-serif">Y</text><text x="1" y="5" font-size="4.500" font-weight="bold" fill="#2030ff" text-anchor="middle" font-family="Liberation Sans, sans-serif">z</text></svg>
<div class="t" style="transform-origin:50% 50%;left:606.5px;top:305.9px;width:60px;text-align:center;font-size:6.6px;font-weight:bold;color:#17651f;-webkit-text-stroke:0">persp</div>
<div style="position:absolute;left:30.5px;top:319.3px;width:404.5px;height:29px;overflow:hidden;">
<div class="t" style="left:6.9px;top:4px;font-size:8px;color:#e8e8e8;">View</div>
<div class="t" style="left:33.1px;top:4px;font-size:8px;color:#e8e8e8;">Shading</div>
<div class="t" style="left:71px;top:4px;font-size:8px;color:#e8e8e8;">Lighting</div>
<div class="t" style="left:109.1px;top:4px;font-size:8px;color:#e8e8e8;">Show</div>
<div class="t" style="left:137.5px;top:4px;font-size:8px;color:#e8e8e8;">Renderer</div>
<div class="t" style="left:178.8px;top:4px;font-size:8px;color:#e8e8e8;">Panels</div>
<div style="position:absolute;left:3.5px;top:16.1px;width:1.6px;height:11px;background:#6c6c6c"></div>
<svg style="position:absolute;left:11.09px;top:17.25px" width="7.83" height="8.70" viewBox="0 0 9.0 10"><rect x="0" y="2.500" width="5.500" height="5" fill="#dedede"/><path d="M6 5l3-2.500v5z" fill="#dedede"/></svg>
<svg style="position:absolute;left:24.59px;top:17.25px" width="7.83" height="8.70" viewBox="0 0 9 10"><rect x="0.500" y="2" width="4.500" height="4" fill="#dedede"/><path d="M5.500 4l3-2v4.500z" fill="#dedede"/><rect x="1" y="5.500" width="3.500" height="4" fill="#3fb6c6"/></svg>
<svg style="position:absolute;left:21.8px;top:15.3px" width="13" height="12.600" viewBox="0 0 13 12.600"><path d="M3 0.800h-2.200v11h2.200M10 0.800h2.200v11h-2.200" fill="none" stroke="#2fc214" stroke-width="1.700"/></svg>
<svg style="position:absolute;left:37.74px;top:17.25px" width="7.22" height="8.70" viewBox="0 0 8.299999999999997 10"><path d="M2 2h4v2" fill="none" stroke="#dedede" stroke-width="1"/><path d="M5.500 4l3-2v4.500z" fill="#dedede"/><circle cx="2.800" cy="6.500" r="2.200" fill="none" stroke="#3fb6c6" stroke-width="1.100"/></svg>
<svg style="position:absolute;left:51.83px;top:17.25px" width="4.35" height="8.70" viewBox="0 0 5.0 10"><path d="M0 0.500h5v8.500l-2.500-2.500l-2.500 2.500z" fill="#dedede"/></svg>
<svg style="position:absolute;left:63.12px;top:17.25px" width="8.27" height="8.70" viewBox="0 0 9.5 10"><path d="M0 9.500l4.500-9v9z" fill="#3fb6c6"/><path d="M5 9.500l4.500-4.500h-4.500z" fill="#999"/><path d="M4.500 0.500l1.500 1v8h-1.500z" fill="#2a8f9c"/></svg>
<svg style="position:absolute;left:76.12px;top:17.25px" width="8.27" height="8.70" viewBox="0 0 9.5 10"><path d="M4 0.500v5M1.500 3h5" stroke="#dedede" stroke-width="1.100"/><path d="M3 6h6v3.500h-4z" fill="#3fb6c6"/></svg>
<svg style="position:absolute;left:88.62px;top:17.25px" width="8.27" height="8.70" viewBox="0 0 9.5 10"><path d="M8.500 0.500l1 1l-5.500 6l-1.800-1.200z" fill="#dedede"/><path d="M0.500 9.500q3-1 4-3" stroke="#3fb6c6" stroke-width="1" fill="none"/><path d="M5 9.500h4" stroke="#dedede" stroke-width="0.800"/></svg>
<div style="position:absolute;left:101.2px;top:16.1px;width:1.6px;height:11px;background:#6c6c6c"></div>
<div style="position:absolute;left:106.8px;top:15.400000000000002px;width:12.5px;height:12.4px;background:#4a7db0;box-shadow:inset 0 0 0 1.2px #5b9bd5"></div>
<svg style="position:absolute;left:108.48px;top:17.25px" width="9.13" height="8.70" viewBox="0 0 10.5 10"><rect x="0.500" y="0.500" width="9.500" height="9" fill="#47525e"/><path d="M0.500 0.500h9.500v9h-9.500zM3 0.500v9M5.250 0.500v9M7.500 0.500v9M0.500 2.800h9.500M0.500 5h9.500M0.500 7.200h9.500" stroke="#e0e0e0" stroke-width="0.800" fill="none"/></svg>
<svg style="position:absolute;left:121.65px;top:17.25px" width="8.70" height="8.70" viewBox="0 0 10 10"><rect x="0.500" y="1.500" width="9" height="7" fill="#333" stroke="#dedede" stroke-width="1"/><path d="M0.500 1.500h9" stroke="#dedede" stroke-width="1.600" stroke-dasharray="1.200 0.800"/></svg>
<svg style="position:absolute;left:134.65px;top:17.25px" width="8.70" height="8.70" viewBox="0 0 10 10"><rect x="0.500" y="1.500" width="9" height="7" fill="none" stroke="#dedede" stroke-width="1"/><circle cx="5" cy="5" r="2" fill="#3fb6c6"/></svg>
<div style="position:absolute;left:146.5px;top:15.900000000000002px;width:11.5px;height:11.4px;background:#4a4a4a;box-shadow:inset 0 0 0 0.8px #585858;border-radius:1px"></div>
<svg style="position:absolute;left:148.12px;top:17.25px" width="8.27" height="8.70" viewBox="0 0 9.5 10"><rect x="2.500" y="2.500" width="4.500" height="4.500" fill="#4a4a4a"/></svg>
<svg style="position:absolute;left:160.65px;top:17.25px" width="8.70" height="8.70" viewBox="0 0 10 10"><rect x="0.500" y="1.500" width="9" height="7" fill="none" stroke="#dedede" stroke-width="1"/><path d="M5 1.500v7M0.500 5h9" stroke="#3fb6c6" stroke-width="0.900"/></svg>
<svg style="position:absolute;left:174.12px;top:17.25px" width="8.27" height="8.70" viewBox="0 0 9.5 10"><rect x="0.500" y="1.500" width="8.500" height="7" fill="none" stroke="#dedede" stroke-width="1"/><circle cx="3.500" cy="6" r="1.200" fill="#3fb6c6"/><circle cx="6" cy="4" r="1.200" fill="#3fb6c6"/></svg>
<svg style="position:absolute;left:186.65px;top:17.25px" width="8.70" height="8.70" viewBox="0 0 10 10"><rect x="0.500" y="1.500" width="9" height="7" fill="none" stroke="#dedede" stroke-width="1"/><path d="M3 3.500h4M5 3.500v3.500" stroke="#3fb6c6" stroke-width="1.300"/></svg>
<div style="position:absolute;left:199.7px;top:16.1px;width:1.6px;height:11px;background:#6c6c6c"></div>
<svg style="position:absolute;left:207.59px;top:17.25px" width="7.83" height="8.70" viewBox="0 0 9 10"><path d="M4.500 0.500l4 2.200v4.600l-4 2.200l-4-2.200v-4.600z" fill="none" stroke="#3fb6c6" stroke-width="1"/><path d="M0.500 2.700l4 2.300l4-2.300M4.500 5v4.500" stroke="#3fb6c6" stroke-width="0.800" fill="none"/></svg>
<div style="position:absolute;left:218px;top:15.400000000000002px;width:12.5px;height:12.4px;background:#4a7db0;box-shadow:inset 0 0 0 1.2px #5b9bd5"></div>
<svg style="position:absolute;left:219.68px;top:17.25px" width="9.13" height="8.70" viewBox="0 0 10.5 10"><path d="M5.250 0.300l4.500 2.400v4.800l-4.500 2.400l-4.500-2.400v-4.800z" fill="#d0c8c0"/><path d="M0.750 2.700l4.500 2.400l4.500-2.400M5.250 5.100v4.800" stroke="#6a6058" stroke-width="0.900" fill="none"/></svg>
<svg style="position:absolute;left:233.55px;top:17.25px" width="7.39" height="8.70" viewBox="0 0 8.5 10"><path d="M4 0.500a4.500 4.500 0 0 0 0 9z" fill="#e0e0e0"/><path d="M5 1.500h1.500v1.500h-1.500zM6.500 3h1.500v1.500h-1.500zM5 4.500h1.500v1.500h-1.500zM6.500 6h1.500v1.500h-1.500zM5 7.500h1.500v1.500h-1.500z" fill="#e0e0e0"/></svg>
<svg style="position:absolute;left:246.32px;top:17.25px" width="8.35" height="8.70" viewBox="0 0 9.600000000000023 10"><path d="M4.800 0.300l4.300 2.400v4.600l-4.300 2.400l-4.300-2.400v-4.600z" fill="#3fb6c6" opacity="0.850"/><path d="M0.500 2.700l4.300 2.300l4.300-2.300M4.800 5v4.700M2.600 1.500v6.800M7 1.500v6.800" stroke="#1d6f7a" stroke-width="0.700" fill="none"/></svg>
<svg style="position:absolute;left:260.05px;top:17.25px" width="7.39" height="8.70" viewBox="0 0 8.5 10"><rect x="0.5" y="1.0" width="1.900" height="1.900" fill="#eee"/><rect x="0.5" y="4.8" width="1.900" height="1.900" fill="#eee"/><rect x="2.4" y="2.9" width="1.900" height="1.900" fill="#eee"/><rect x="2.4" y="6.699999999999999" width="1.900" height="1.900" fill="#eee"/><rect x="4.3" y="1.0" width="1.900" height="1.900" fill="#eee"/><rect x="4.3" y="4.8" width="1.900" height="1.900" fill="#eee"/><rect x="6.199999999999999" y="2.9" width="1.900" height="1.900" fill="#eee"/><rect x="6.199999999999999" y="6.699999999999999" width="1.900" height="1.900" fill="#eee"/></svg>
<svg style="position:absolute;left:272.58px;top:17.25px" width="7.83" height="8.70" viewBox="0 0 9 10"><circle cx="4.500" cy="4" r="2.400" fill="#e8e8e8"/><rect x="3.500" y="6" width="2" height="2.500" fill="#ddd"/><path d="M4.500 0v0.800M0.300 4h1M7.700 4h1M1.500 1l0.700 0.700M7.500 1l-0.700 0.700" stroke="#ddd" stroke-width="0.700"/></svg>
<svg style="position:absolute;left:285.40px;top:17.25px" width="8.00" height="8.70" viewBox="0 0 9.199999999999989 10"><circle cx="6" cy="4.500" r="2.800" fill="#3f6a72"/><ellipse cx="3.500" cy="7.500" rx="3" ry="1.300" fill="#4a6a70"/></svg>
<div style="position:absolute;left:297.9px;top:16.1px;width:1.6px;height:11px;background:#6c6c6c"></div>
<svg style="position:absolute;left:305.58px;top:17.25px" width="7.83" height="8.70" viewBox="0 0 9 10"><path d="M0.500 5a4 4 0 0 1 8 0z" fill="#e0e0e0"/><path d="M0.500 5.500a4 4 0 0 0 8 0z" fill="#aaa"/><ellipse cx="4.500" cy="8.300" rx="4" ry="1.300" fill="none" stroke="#3fb6c6" stroke-width="1"/></svg>
<svg style="position:absolute;left:318.37px;top:17.25px" width="8.96" height="8.70" viewBox="0 0 10.300000000000011 10"><rect x="0" y="2" width="7" height="6" rx="3" fill="#999"/><circle cx="6.500" cy="5" r="3.200" fill="#e6e6e6"/></svg>
<svg style="position:absolute;left:332.08px;top:17.25px" width="7.83" height="8.70" viewBox="0 0 9.0 10"><circle cx="4.500" cy="5" r="3.600" fill="none" stroke="#e0e0e0" stroke-width="1.300"/><path d="M4.500 1.400a3.600 3.600 0 0 1 3.600 3.600" fill="none" stroke="#3fb6c6" stroke-width="1.300"/><path d="M4.500 8.600a3.600 3.600 0 0 1-3.600-3.600" fill="none" stroke="#3fb6c6" stroke-width="1.300"/></svg>
<div style="position:absolute;left:343.5px;top:15.900000000000002px;width:12.0px;height:11.4px;background:#4a4a4a;box-shadow:inset 0 0 0 0.8px #585858;border-radius:1px"></div>
<svg style="position:absolute;left:345.15px;top:17.25px" width="8.70" height="8.70" viewBox="0 0 10.0 10"><rect x="1.500" y="2" width="3" height="6" fill="#3f5f66"/><rect x="5.500" y="3.500" width="3" height="4.500" fill="#3f5f66"/></svg>
<div style="position:absolute;left:357.2px;top:16.1px;width:1.6px;height:11px;background:#6c6c6c"></div>
<svg style="position:absolute;left:364.68px;top:17.25px" width="9.13" height="8.70" viewBox="0 0 10.5 10"><path d="M0.500 1.500h6M0.500 3.500h6M0.500 5.500h4M1.500 0.500v6M3.500 0.500v6M5.500 0.500v4" stroke="#3fb6c6" stroke-width="0.700"/><path d="M5.500 3l0 6l1.500-1.200l1 2.200l1-0.500l-1-2.100l2-0.200z" fill="#e4e4e4"/></svg>
<div style="position:absolute;left:377.5px;top:16.1px;width:1.6px;height:11px;background:#6c6c6c"></div>
<svg style="position:absolute;left:385.08px;top:17.25px" width="7.83" height="8.70" viewBox="0 0 9.0 10"><rect x="2.500" y="0.500" width="6" height="6" fill="none" stroke="#e8e8e8" stroke-width="1.200"/><rect x="0.600" y="3" width="6" height="6" fill="#444" stroke="#e8e8e8" stroke-width="1.200"/></svg>
<svg style="position:absolute;left:397.58px;top:17.25px" width="7.83" height="8.70" viewBox="0 0 9 10"><path d="M1 2v7h7" stroke="#3fb6c6" stroke-width="2" fill="none"/><rect x="3.500" y="0.500" width="5" height="5" fill="none" stroke="#ddd" stroke-width="0.800"/></svg>
</div>
<div style="position:absolute;left:32px;top:348px;width:402px;height:198px;overflow:hidden;background:#5f5f5f;">
<svg width="402" height="198" viewBox="0 0 402 198" style="position:absolute;left:0;top:0"><path d="M18.46 0v198.0M33.46 0v198.0M49.46 0v198.0M65.46 0v198.0M81.46 0v198.0M97.46 0v198.0M113.46 0v198.0M129.46 0v198.0M145.46 0v198.0M161.46 0v198.0M177.46 0v198.0M193.46 0v198.0M209.46 0v198.0M225.46 0v198.0M240.46 0v198.0M256.46 0v198.0M272.46 0v198.0M288.46 0v198.0M304.46 0v198.0M320.46 0v198.0M336.46 0v198.0M352.46 0v198.0M368.46 0v198.0M384.46 0v198.0M400.46 0v198.0M0 19.50h402.0M0 35.50h402.0M0 51.50h402.0M0 67.50h402.0M0 83.50h402.0M0 99.50h402.0M0 115.50h402.0M0 131.50h402.0M0 147.50h402.0M0 163.50h402.0M0 179.50h402.0M0 195.50h402.0" stroke="#6c6c6c" stroke-width="0.800" opacity="0.450" fill="none"/><path d="M10.50 0v198.0M25.50 0v198.0M41.50 0v198.0M57.50 0v198.0M73.50 0v198.0M89.50 0v198.0M105.50 0v198.0M121.50 0v198.0M137.50 0v198.0M153.50 0v198.0M169.50 0v198.0M185.50 0v198.0M201.50 0v198.0M217.50 0v198.0M232.50 0v198.0M248.50 0v198.0M264.50 0v198.0M280.50 0v198.0M296.50 0v198.0M312.50 0v198.0M328.50 0v198.0M344.50 0v198.0M360.50 0v198.0M376.50 0v198.0M392.50 0v198.0M0 11.50h402.0M0 27.50h402.0M0 43.50h402.0M0 59.50h402.0M0 75.50h402.0M0 91.50h402.0M0 107.50h402.0M0 123.50h402.0M0 139.50h402.0M0 155.50h402.0M0 171.50h402.0M0 187.50h402.0" stroke="#ffffff" stroke-width="3" opacity="0.05" fill="none"/><path d="M10.50 0v198.0M25.50 0v198.0M41.50 0v198.0M57.50 0v198.0M73.50 0v198.0M89.50 0v198.0M105.50 0v198.0M121.50 0v198.0M137.50 0v198.0M153.50 0v198.0M169.50 0v198.0M185.50 0v198.0M201.50 0v198.0M217.50 0v198.0M232.50 0v198.0M248.50 0v198.0M264.50 0v198.0M280.50 0v198.0M296.50 0v198.0M312.50 0v198.0M328.50 0v198.0M344.50 0v198.0M360.50 0v198.0M376.50 0v198.0M392.50 0v198.0M0 11.50h402.0M0 27.50h402.0M0 43.50h402.0M0 59.50h402.0M0 75.50h402.0M0 91.50h402.0M0 107.50h402.0M0 123.50h402.0M0 139.50h402.0M0 155.50h402.0M0 171.50h402.0M0 187.50h402.0" stroke="#9a9a9a" stroke-width="1" opacity="1" fill="none"/><path d="M0 171.5h402" stroke="#1c1c1c" stroke-width="1.100"/><path d="M201.5 0v198" stroke="#404040" stroke-width="1.100"/><defs><radialGradient id="b271"><stop offset="0" stop-color="#8a928d"/><stop offset="0.65" stop-color="#859c90"/><stop offset="0.88" stop-color="#60cc96"/><stop offset="1" stop-color="#3cee8e"/></radialGradient></defs><circle cx="271.9" cy="129.5" r="16.0" fill="url(#b271)"/><path d="M269.40 113.70h5.01M266.96 114.28h9.89M264.64 115.24h14.53M262.50 116.56h18.81M260.59 118.19h22.63M258.96 120.10h25.89M257.64 122.24h28.51M256.68 124.56h30.43M256.10 127.00h31.61M255.90 129.50h32.00M256.10 132.00h31.61M256.68 134.44h30.43M257.64 136.76h28.51M258.96 138.90h25.89M260.59 140.81h22.63M262.50 142.44h18.81M264.64 143.76h14.53M266.96 144.72h9.89M269.40 145.30h5.01" stroke="#3cf090" stroke-width="0.650" opacity="0.550" fill="none"/><ellipse cx="271.9" cy="129.5" rx="0.00" ry="16.0" fill="none" stroke="#3cf090" stroke-width="0.650" opacity="0.550"/><ellipse cx="271.9" cy="129.5" rx="2.50" ry="16.0" fill="none" stroke="#3cf090" stroke-width="0.650" opacity="0.550"/><ellipse cx="271.9" cy="129.5" rx="4.94" ry="16.0" fill="none" stroke="#3cf090" stroke-width="0.650" opacity="0.550"/><ellipse cx="271.9" cy="129.5" rx="7.26" ry="16.0" fill="none" stroke="#3cf090" stroke-width="0.650" opacity="0.550"/><ellipse cx="271.9" cy="129.5" rx="9.40" ry="16.0" fill="none" stroke="#3cf090" stroke-width="0.650" opacity="0.550"/><ellipse cx="271.9" cy="129.5" rx="11.31" ry="16.0" fill="none" stroke="#3cf090" stroke-width="0.650" opacity="0.550"/><ellipse cx="271.9" cy="129.5" rx="12.94" ry="16.0" fill="none" stroke="#3cf090" stroke-width="0.650" opacity="0.550"/><ellipse cx="271.9" cy="129.5" rx="14.26" ry="16.0" fill="none" stroke="#3cf090" stroke-width="0.650" opacity="0.550"/><ellipse cx="271.9" cy="129.5" rx="15.22" ry="16.0" fill="none" stroke="#3cf090" stroke-width="0.650" opacity="0.550"/><ellipse cx="271.9" cy="129.5" rx="15.80" ry="16.0" fill="none" stroke="#3cf090" stroke-width="0.650" opacity="0.550"/><circle cx="271.9" cy="129.5" r="15.6" fill="none" stroke="#3cf090" stroke-width="1.200"/></svg>
</div>
<svg style="position:absolute;left:48.9px;top:527px" width="1" height="1" viewBox="0 0 1 1"><path d="M0 0h8" stroke="#e02020" stroke-width="0.900"/><path d="M0 0v-7" stroke="#20d020" stroke-width="0.900"/><text x="10.5" y="1.3" font-size="4.500" font-weight="bold" fill="#e02020" text-anchor="middle" font-family="Liberation Sans, sans-serif">x</text><text x="0" y="-9" font-size="4.500" font-weight="bold" fill="#20d020" text-anchor="middle" font-family="Liberation Sans, sans-serif">Y</text><text x="-0.5" y="1.5" font-size="4.500" font-weight="bold" fill="#2030ff" text-anchor="middle" font-family="Liberation Sans, sans-serif">z</text></svg>
<div class="t" style="transform-origin:50% 50%;left:201px;top:532.2px;width:60px;text-align:center;font-size:7.2px;font-weight:bold;color:#17651f;-webkit-text-stroke:0">front -Z</div>
<div style="position:absolute;left:436.5px;top:319.3px;width:405.5px;height:29px;overflow:hidden;">
<div class="t" style="left:6.9px;top:4px;font-size:8px;color:#e8e8e8;">View</div>
<div class="t" style="left:33.1px;top:4px;font-size:8px;color:#e8e8e8;">Shading</div>
<div class="t" style="left:71px;top:4px;font-size:8px;color:#e8e8e8;">Lighting</div>
<div class="t" style="left:109.1px;top:4px;font-size:8px;color:#e8e8e8;">Show</div>
<div class="t" style="left:137.5px;top:4px;font-size:8px;color:#e8e8e8;">Renderer</div>
<div class="t" style="left:178.8px;top:4px;font-size:8px;color:#e8e8e8;">Panels</div>
<div style="position:absolute;left:3.5px;top:16.1px;width:1.6px;height:11px;background:#6c6c6c"></div>
<svg style="position:absolute;left:11.09px;top:17.25px" width="7.83" height="8.70" viewBox="0 0 9.0 10"><rect x="0" y="2.500" width="5.500" height="5" fill="#dedede"/><path d="M6 5l3-2.500v5z" fill="#dedede"/></svg>
<svg style="position:absolute;left:24.59px;top:17.25px" width="7.83" height="8.70" viewBox="0 0 9 10"><rect x="0.500" y="2" width="4.500" height="4" fill="#dedede"/><path d="M5.500 4l3-2v4.500z" fill="#dedede"/><rect x="1" y="5.500" width="3.500" height="4" fill="#3fb6c6"/></svg>
<svg style="position:absolute;left:21.8px;top:15.3px" width="13" height="12.600" viewBox="0 0 13 12.600"><path d="M3 0.800h-2.200v11h2.200M10 0.800h2.200v11h-2.200" fill="none" stroke="#2fc214" stroke-width="1.700"/></svg>
<svg style="position:absolute;left:37.74px;top:17.25px" width="7.22" height="8.70" viewBox="0 0 8.299999999999997 10"><path d="M2 2h4v2" fill="none" stroke="#dedede" stroke-width="1"/><path d="M5.500 4l3-2v4.500z" fill="#dedede"/><circle cx="2.800" cy="6.500" r="2.200" fill="none" stroke="#3fb6c6" stroke-width="1.100"/></svg>
<svg style="position:absolute;left:51.83px;top:17.25px" width="4.35" height="8.70" viewBox="0 0 5.0 10"><path d="M0 0.500h5v8.500l-2.500-2.500l-2.500 2.500z" fill="#dedede"/></svg>
<svg style="position:absolute;left:63.12px;top:17.25px" width="8.27" height="8.70" viewBox="0 0 9.5 10"><path d="M0 9.500l4.500-9v9z" fill="#3fb6c6"/><path d="M5 9.500l4.500-4.500h-4.500z" fill="#999"/><path d="M4.500 0.500l1.500 1v8h-1.500z" fill="#2a8f9c"/></svg>
<svg style="position:absolute;left:76.12px;top:17.25px" width="8.27" height="8.70" viewBox="0 0 9.5 10"><path d="M4 0.500v5M1.500 3h5" stroke="#dedede" stroke-width="1.100"/><path d="M3 6h6v3.500h-4z" fill="#3fb6c6"/></svg>
<svg style="position:absolute;left:88.62px;top:17.25px" width="8.27" height="8.70" viewBox="0 0 9.5 10"><path d="M8.500 0.500l1 1l-5.500 6l-1.800-1.200z" fill="#dedede"/><path d="M0.500 9.500q3-1 4-3" stroke="#3fb6c6" stroke-width="1" fill="none"/><path d="M5 9.500h4" stroke="#dedede" stroke-width="0.800"/></svg>
<div style="position:absolute;left:101.2px;top:16.1px;width:1.6px;height:11px;background:#6c6c6c"></div>
<div style="position:absolute;left:106.8px;top:15.400000000000002px;width:12.5px;height:12.4px;background:#4a7db0;box-shadow:inset 0 0 0 1.2px #5b9bd5"></div>
<svg style="position:absolute;left:108.48px;top:17.25px" width="9.13" height="8.70" viewBox="0 0 10.5 10"><rect x="0.500" y="0.500" width="9.500" height="9" fill="#47525e"/><path d="M0.500 0.500h9.500v9h-9.500zM3 0.500v9M5.250 0.500v9M7.500 0.500v9M0.500 2.800h9.500M0.500 5h9.500M0.500 7.200h9.500" stroke="#e0e0e0" stroke-width="0.800" fill="none"/></svg>
<svg style="position:absolute;left:121.65px;top:17.25px" width="8.70" height="8.70" viewBox="0 0 10 10"><rect x="0.500" y="1.500" width="9" height="7" fill="#333" stroke="#dedede" stroke-width="1"/><path d="M0.500 1.500h9" stroke="#dedede" stroke-width="1.600" stroke-dasharray="1.200 0.800"/></svg>
<svg style="position:absolute;left:134.65px;top:17.25px" width="8.70" height="8.70" viewBox="0 0 10 10"><rect x="0.500" y="1.500" width="9" height="7" fill="none" stroke="#dedede" stroke-width="1"/><circle cx="5" cy="5" r="2" fill="#3fb6c6"/></svg>
<div style="position:absolute;left:146.5px;top:15.900000000000002px;width:11.5px;height:11.4px;background:#4a4a4a;box-shadow:inset 0 0 0 0.8px #585858;border-radius:1px"></div>
<svg style="position:absolute;left:148.12px;top:17.25px" width="8.27" height="8.70" viewBox="0 0 9.5 10"><rect x="2.500" y="2.500" width="4.500" height="4.500" fill="#4a4a4a"/></svg>
<svg style="position:absolute;left:160.65px;top:17.25px" width="8.70" height="8.70" viewBox="0 0 10 10"><rect x="0.500" y="1.500" width="9" height="7" fill="none" stroke="#dedede" stroke-width="1"/><path d="M5 1.500v7M0.500 5h9" stroke="#3fb6c6" stroke-width="0.900"/></svg>
<svg style="position:absolute;left:174.12px;top:17.25px" width="8.27" height="8.70" viewBox="0 0 9.5 10"><rect x="0.500" y="1.500" width="8.500" height="7" fill="none" stroke="#dedede" stroke-width="1"/><circle cx="3.500" cy="6" r="1.200" fill="#3fb6c6"/><circle cx="6" cy="4" r="1.200" fill="#3fb6c6"/></svg>
<svg style="position:absolute;left:186.65px;top:17.25px" width="8.70" height="8.70" viewBox="0 0 10 10"><rect x="0.500" y="1.500" width="9" height="7" fill="none" stroke="#dedede" stroke-width="1"/><path d="M3 3.500h4M5 3.500v3.500" stroke="#3fb6c6" stroke-width="1.300"/></svg>
<div style="position:absolute;left:199.7px;top:16.1px;width:1.6px;height:11px;background:#6c6c6c"></div>
<svg style="position:absolute;left:207.59px;top:17.25px" width="7.83" height="8.70" viewBox="0 0 9 10"><path d="M4.500 0.500l4 2.200v4.600l-4 2.200l-4-2.200v-4.600z" fill="none" stroke="#3fb6c6" stroke-width="1"/><path d="M0.500 2.700l4 2.300l4-2.300M4.500 5v4.500" stroke="#3fb6c6" stroke-width="0.800" fill="none"/></svg>
<div style="position:absolute;left:218px;top:15.400000000000002px;width:12.5px;height:12.4px;background:#4a7db0;box-shadow:inset 0 0 0 1.2px #5b9bd5"></div>
<svg style="position:absolute;left:219.68px;top:17.25px" width="9.13" height="8.70" viewBox="0 0 10.5 10"><path d="M5.250 0.300l4.500 2.400v4.800l-4.500 2.400l-4.500-2.400v-4.800z" fill="#d0c8c0"/><path d="M0.750 2.700l4.500 2.400l4.500-2.400M5.250 5.100v4.800" stroke="#6a6058" stroke-width="0.900" fill="none"/></svg>
<svg style="position:absolute;left:233.55px;top:17.25px" width="7.39" height="8.70" viewBox="0 0 8.5 10"><path d="M4 0.500a4.500 4.500 0 0 0 0 9z" fill="#e0e0e0"/><path d="M5 1.500h1.500v1.500h-1.500zM6.500 3h1.500v1.500h-1.500zM5 4.500h1.500v1.500h-1.500zM6.500 6h1.500v1.500h-1.500zM5 7.500h1.500v1.500h-1.500z" fill="#e0e0e0"/></svg>
<svg style="position:absolute;left:246.32px;top:17.25px" width="8.35" height="8.70" viewBox="0 0 9.600000000000023 10"><path d="M4.800 0.300l4.300 2.400v4.600l-4.300 2.400l-4.300-2.400v-4.600z" fill="#3fb6c6" opacity="0.850"/><path d="M0.500 2.700l4.300 2.300l4.300-2.300M4.800 5v4.700M2.600 1.500v6.800M7 1.500v6.800" stroke="#1d6f7a" stroke-width="0.700" fill="none"/></svg>
<svg style="position:absolute;left:260.05px;top:17.25px" width="7.39" height="8.70" viewBox="0 0 8.5 10"><rect x="0.5" y="1.0" width="1.900" height="1.900" fill="#eee"/><rect x="0.5" y="4.8" width="1.900" height="1.900" fill="#eee"/><rect x="2.4" y="2.9" width="1.900" height="1.900" fill="#eee"/><rect x="2.4" y="6.699999999999999" width="1.900" height="1.900" fill="#eee"/><rect x="4.3" y="1.0" width="1.900" height="1.900" fill="#eee"/><rect x="4.3" y="4.8" width="1.900" height="1.900" fill="#eee"/><rect x="6.199999999999999" y="2.9" width="1.900" height="1.900" fill="#eee"/><rect x="6.199999999999999" y="6.699999999999999" width="1.900" height="1.900" fill="#eee"/></svg>
<svg style="position:absolute;left:272.58px;top:17.25px" width="7.83" height="8.70" viewBox="0 0 9 10"><circle cx="4.500" cy="4" r="2.400" fill="#e8e8e8"/><rect x="3.500" y="6" width="2" height="2.500" fill="#ddd"/><path d="M4.500 0v0.800M0.300 4h1M7.700 4h1M1.500 1l0.700 0.700M7.500 1l-0.700 0.700" stroke="#ddd" stroke-width="0.700"/></svg>
<svg style="position:absolute;left:285.40px;top:17.25px" width="8.00" height="8.70" viewBox="0 0 9.199999999999989 10"><circle cx="6" cy="4.500" r="2.800" fill="#3f6a72"/><ellipse cx="3.500" cy="7.500" rx="3" ry="1.300" fill="#4a6a70"/></svg>
<div style="position:absolute;left:297.9px;top:16.1px;width:1.6px;height:11px;background:#6c6c6c"></div>
<svg style="position:absolute;left:305.58px;top:17.25px" width="7.83" height="8.70" viewBox="0 0 9 10"><path d="M0.500 5a4 4 0 0 1 8 0z" fill="#e0e0e0"/><path d="M0.500 5.500a4 4 0 0 0 8 0z" fill="#aaa"/><ellipse cx="4.500" cy="8.300" rx="4" ry="1.300" fill="none" stroke="#3fb6c6" stroke-width="1"/></svg>
<svg style="position:absolute;left:318.37px;top:17.25px" width="8.96" height="8.70" viewBox="0 0 10.300000000000011 10"><rect x="0" y="2" width="7" height="6" rx="3" fill="#999"/><circle cx="6.500" cy="5" r="3.200" fill="#e6e6e6"/></svg>
<svg style="position:absolute;left:332.08px;top:17.25px" width="7.83" height="8.70" viewBox="0 0 9.0 10"><circle cx="4.500" cy="5" r="3.600" fill="none" stroke="#e0e0e0" stroke-width="1.300"/><path d="M4.500 1.400a3.600 3.600 0 0 1 3.600 3.600" fill="none" stroke="#3fb6c6" stroke-width="1.300"/><path d="M4.500 8.600a3.600 3.600 0 0 1-3.600-3.600" fill="none" stroke="#3fb6c6" stroke-width="1.300"/></svg>
<div style="position:absolute;left:343.5px;top:15.900000000000002px;width:12.0px;height:11.4px;background:#4a4a4a;box-shadow:inset 0 0 0 0.8px #585858;border-radius:1px"></div>
<svg style="position:absolute;left:345.15px;top:17.25px" width="8.70" height="8.70" viewBox="0 0 10.0 10"><rect x="1.500" y="2" width="3" height="6" fill="#3f5f66"/><rect x="5.500" y="3.500" width="3" height="4.500" fill="#3f5f66"/></svg>
<div style="position:absolute;left:357.2px;top:16.1px;width:1.6px;height:11px;background:#6c6c6c"></div>
<svg style="position:absolute;left:364.68px;top:17.25px" width="9.13" height="8.70" viewBox="0 0 10.5 10"><path d="M0.500 1.500h6M0.500 3.500h6M0.500 5.500h4M1.500 0.500v6M3.500 0.500v6M5.500 0.500v4" stroke="#3fb6c6" stroke-width="0.700"/><path d="M5.500 3l0 6l1.500-1.200l1 2.200l1-0.500l-1-2.100l2-0.200z" fill="#e4e4e4"/></svg>
<div style="position:absolute;left:377.5px;top:16.1px;width:1.6px;height:11px;background:#6c6c6c"></div>
<svg style="position:absolute;left:385.08px;top:17.25px" width="7.83" height="8.70" viewBox="0 0 9.0 10"><rect x="2.500" y="0.500" width="6" height="6" fill="none" stroke="#e8e8e8" stroke-width="1.200"/><rect x="0.600" y="3" width="6" height="6" fill="#444" stroke="#e8e8e8" stroke-width="1.200"/></svg>
<svg style="position:absolute;left:397.58px;top:17.25px" width="7.83" height="8.70" viewBox="0 0 9 10"><path d="M1 2v7h7" stroke="#3fb6c6" stroke-width="2" fill="none"/><rect x="3.500" y="0.500" width="5" height="5" fill="none" stroke="#ddd" stroke-width="0.800"/></svg>
</div>
<div style="position:absolute;left:439px;top:348px;width:402px;height:198px;overflow:hidden;background:#5f5f5f;">
<svg width="402" height="198" viewBox="0 0 402 198" style="position:absolute;left:0;top:0"><path d="M17.50 0v198.0M33.50 0v198.0M49.50 0v198.0M65.50 0v198.0M81.50 0v198.0M97.50 0v198.0M113.50 0v198.0M129.50 0v198.0M145.50 0v198.0M161.50 0v198.0M177.50 0v198.0M193.50 0v198.0M209.50 0v198.0M225.50 0v198.0M241.50 0v198.0M257.50 0v198.0M273.50 0v198.0M289.50 0v198.0M305.50 0v198.0M321.50 0v198.0M337.50 0v198.0M353.50 0v198.0M369.50 0v198.0M385.50 0v198.0M401.50 0v198.0M0 18.50h402.0M0 34.50h402.0M0 50.50h402.0M0 66.50h402.0M0 82.50h402.0M0 98.50h402.0M0 114.50h402.0M0 130.50h402.0M0 146.50h402.0M0 162.50h402.0M0 178.50h402.0M0 194.50h402.0" stroke="#6c6c6c" stroke-width="0.800" opacity="0.450" fill="none"/><path d="M9.50 0v198.0M25.50 0v198.0M41.50 0v198.0M57.50 0v198.0M73.50 0v198.0M89.50 0v198.0M105.50 0v198.0M121.50 0v198.0M137.50 0v198.0M153.50 0v198.0M169.50 0v198.0M185.50 0v198.0M201.50 0v198.0M217.50 0v198.0M233.50 0v198.0M249.50 0v198.0M265.50 0v198.0M281.50 0v198.0M297.50 0v198.0M313.50 0v198.0M329.50 0v198.0M345.50 0v198.0M361.50 0v198.0M377.50 0v198.0M393.50 0v198.0M0 10.50h402.0M0 26.50h402.0M0 42.50h402.0M0 58.50h402.0M0 74.50h402.0M0 90.50h402.0M0 106.50h402.0M0 122.50h402.0M0 138.50h402.0M0 154.50h402.0M0 170.50h402.0M0 186.50h402.0" stroke="#ffffff" stroke-width="3" opacity="0.05" fill="none"/><path d="M9.50 0v198.0M25.50 0v198.0M41.50 0v198.0M57.50 0v198.0M73.50 0v198.0M89.50 0v198.0M105.50 0v198.0M121.50 0v198.0M137.50 0v198.0M153.50 0v198.0M169.50 0v198.0M185.50 0v198.0M201.50 0v198.0M217.50 0v198.0M233.50 0v198.0M249.50 0v198.0M265.50 0v198.0M281.50 0v198.0M297.50 0v198.0M313.50 0v198.0M329.50 0v198.0M345.50 0v198.0M361.50 0v198.0M377.50 0v198.0M393.50 0v198.0M0 10.50h402.0M0 26.50h402.0M0 42.50h402.0M0 58.50h402.0M0 74.50h402.0M0 90.50h402.0M0 106.50h402.0M0 122.50h402.0M0 138.50h402.0M0 154.50h402.0M0 170.50h402.0M0 186.50h402.0" stroke="#9a9a9a" stroke-width="1" opacity="1" fill="none"/><path d="M0 171.10000000000002h402" stroke="#1c1c1c" stroke-width="1.100"/><path d="M201.39999999999998 0v198" stroke="#404040" stroke-width="1.100"/><defs><radialGradient id="b200"><stop offset="0" stop-color="#8a928d"/><stop offset="0.65" stop-color="#859c90"/><stop offset="0.88" stop-color="#60cc96"/><stop offset="1" stop-color="#3cee8e"/></radialGradient></defs><circle cx="200.70000000000005" cy="129.60000000000002" r="16.1" fill="url(#b200)"/><path d="M198.18 113.70h5.04M195.72 114.29h9.95M193.39 115.25h14.62M191.24 116.57h18.93M189.32 118.22h22.77M187.67 120.14h26.05M186.35 122.29h28.69M185.39 124.62h30.62M184.80 127.08h31.80M184.60 129.60h32.20M184.80 132.12h31.80M185.39 134.58h30.62M186.35 136.91h28.69M187.67 139.06h26.05M189.32 140.98h22.77M191.24 142.63h18.93M193.39 143.95h14.62M195.72 144.91h9.95M198.18 145.50h5.04" stroke="#3cf090" stroke-width="0.650" opacity="0.550" fill="none"/><ellipse cx="200.70000000000005" cy="129.60000000000002" rx="0.00" ry="16.1" fill="none" stroke="#3cf090" stroke-width="0.650" opacity="0.550"/><ellipse cx="200.70000000000005" cy="129.60000000000002" rx="2.52" ry="16.1" fill="none" stroke="#3cf090" stroke-width="0.650" opacity="0.550"/><ellipse cx="200.70000000000005" cy="129.60000000000002" rx="4.98" ry="16.1" fill="none" stroke="#3cf090" stroke-width="0.650" opacity="0.550"/><ellipse cx="200.70000000000005" cy="129.60000000000002" rx="7.31" ry="16.1" fill="none" stroke="#3cf090" stroke-width="0.650" opacity="0.550"/><ellipse cx="200.70000000000005" cy="129.60000000000002" rx="9.46" ry="16.1" fill="none" stroke="#3cf090" stroke-width="0.650" opacity="0.550"/><ellipse cx="200.70000000000005" cy="129.60000000000002" rx="11.38" ry="16.1" fill="none" stroke="#3cf090" stroke-width="0.650" opacity="0.550"/><ellipse cx="200.70000000000005" cy="129.60000000000002" rx="13.03" ry="16.1" fill="none" stroke="#3cf090" stroke-width="0.650" opacity="0.550"/><ellipse cx="200.70000000000005" cy="129.60000000000002" rx="14.35" ry="16.1" fill="none" stroke="#3cf090" stroke-width="0.650" opacity="0.550"/><ellipse cx="200.70000000000005" cy="129.60000000000002" rx="15.31" ry="16.1" fill="none" stroke="#3cf090" stroke-width="0.650" opacity="0.550"/><ellipse cx="200.70000000000005" cy="129.60000000000002" rx="15.90" ry="16.1" fill="none" stroke="#3cf090" stroke-width="0.650" opacity="0.550"/><circle cx="200.70000000000005" cy="129.60000000000002" r="15.700000000000001" fill="none" stroke="#3cf090" stroke-width="1.200"/></svg>
</div>
<svg style="position:absolute;left:455.3px;top:526.4px" width="1" height="1" viewBox="0 0 1 1"><path d="M0 0h-8" stroke="#2030ff" stroke-width="0.900"/><path d="M0 0v-7" stroke="#20d020" stroke-width="0.900"/><text x="-10" y="0.5" font-size="4.500" font-weight="bold" fill="#2030ff" text-anchor="middle" font-family="Liberation Sans, sans-serif">z</text><text x="0" y="-9" font-size="4.500" font-weight="bold" fill="#20d020" text-anchor="middle" font-family="Liberation Sans, sans-serif">Y</text><text x="0.5" y="1.5" font-size="4.500" font-weight="bold" fill="#e02020" text-anchor="middle" font-family="Liberation Sans, sans-serif">x</text></svg>
<div class="t" style="transform-origin:50% 50%;left:606.3px;top:532.6px;width:60px;text-align:center;font-size:7.2px;font-weight:bold;color:#17651f;-webkit-text-stroke:0">side -X</div>
<div style="position:absolute;left:844px;top:92px;width:180px;height:456px;background:#3e3e3e;"></div>
<div style="position:absolute;left:847.5px;top:94px;width:165px;height:237px;background:#444444;"></div>
<div class="t " style="left:852.3px;top:96.40px;font-size:8px;color:#e4e4e4;font-weight:normal;">Channels</div>
<div class="t " style="left:894.3px;top:96.40px;font-size:8px;color:#e4e4e4;font-weight:normal;">Edit</div>
<div class="t " style="left:917.2px;top:96.40px;font-size:8px;color:#e4e4e4;font-weight:normal;">Object</div>
<div class="t " style="left:949.8px;top:96.40px;font-size:8px;color:#e4e4e4;font-weight:normal;">Show</div>
<div class="t " style="left:849px;top:109.30px;font-size:8px;color:#e8e8e8;font-weight:bold;-webkit-text-stroke:0.05px currentColor">ball01</div>
<div style="position:absolute;left:970.5px;top:119.9px;width:4.3px;height:104.0px;background:#d8281e;"></div>
<div style="position:absolute;left:975px;top:120.2px;width:37px;height:9.6px;background:#2b2b2b;"></div>
<div class="t" style="transform-origin:100% 50%;left:850px;width:116.500px;text-align:right;top:119.10000000000001px;font-size:8px;color:#d8d8d8;font-weight:normal;">Translate X</div>
<div class="t " style="left:976.5px;top:118.80px;font-size:8px;color:#ececec;font-weight:normal;">4.436</div>
<div style="position:absolute;left:975px;top:130.60000000000002px;width:37px;height:9.6px;background:#2b2b2b;"></div>
<div class="t" style="transform-origin:100% 50%;left:850px;width:116.500px;text-align:right;top:129.5px;font-size:8px;color:#d8d8d8;font-weight:normal;">Translate Y</div>
<div class="t " style="left:976.5px;top:129.20px;font-size:8px;color:#ececec;font-weight:normal;">2.583</div>
<div style="position:absolute;left:975px;top:141.00000000000003px;width:37px;height:9.6px;background:#2b2b2b;"></div>
<div class="t" style="transform-origin:100% 50%;left:850px;width:116.500px;text-align:right;top:139.9px;font-size:8px;color:#d8d8d8;font-weight:normal;">Translate Z</div>
<div class="t " style="left:976.5px;top:139.60px;font-size:8px;color:#ececec;font-weight:normal;">0</div>
<div style="position:absolute;left:975px;top:151.40000000000003px;width:37px;height:9.6px;background:#2b2b2b;"></div>
<div class="t" style="transform-origin:100% 50%;left:850px;width:116.500px;text-align:right;top:150.3px;font-size:8px;color:#d8d8d8;font-weight:normal;">Rotate X</div>
<div class="t " style="left:976.5px;top:150.00px;font-size:8px;color:#ececec;font-weight:normal;">0</div>
<div style="position:absolute;left:975px;top:161.8px;width:37px;height:9.6px;background:#2b2b2b;"></div>
<div class="t" style="transform-origin:100% 50%;left:850px;width:116.500px;text-align:right;top:160.7px;font-size:8px;color:#d8d8d8;font-weight:normal;">Rotate Y</div>
<div class="t " style="left:976.5px;top:160.40px;font-size:8px;color:#ececec;font-weight:normal;">0</div>
<div style="position:absolute;left:975px;top:172.20000000000002px;width:37px;height:9.6px;background:#2b2b2b;"></div>
<div class="t" style="transform-origin:100% 50%;left:850px;width:116.500px;text-align:right;top:171.1px;font-size:8px;color:#d8d8d8;font-weight:normal;">Rotate Z</div>
<div class="t " style="left:976.5px;top:170.80px;font-size:8px;color:#ececec;font-weight:normal;">0</div>
<div style="position:absolute;left:848px;top:182.3px;width:122.5px;height:9.8px;background:#4f87b6;"></div>
<div style="position:absolute;left:975px;top:182.60000000000002px;width:37px;height:9.6px;background:#2b2b2b;"></div>
<div class="t" style="transform-origin:100% 50%;left:850px;width:116.500px;text-align:right;top:181.5px;font-size:8px;color:#ffffff;font-weight:bold;-webkit-text-stroke:0.05px">Scale X</div>
<div class="t " style="left:976.5px;top:181.20px;font-size:8px;color:#ececec;font-weight:normal;">1</div>
<div style="position:absolute;left:848px;top:192.7px;width:122.5px;height:9.8px;background:#4f87b6;"></div>
<div style="position:absolute;left:975px;top:193.0px;width:37px;height:9.6px;background:#2b2b2b;"></div>
<div class="t" style="transform-origin:100% 50%;left:850px;width:116.500px;text-align:right;top:191.89999999999998px;font-size:8px;color:#ffffff;font-weight:bold;-webkit-text-stroke:0.05px">Scale Y</div>
<div class="t " style="left:976.5px;top:191.60px;font-size:8px;color:#ececec;font-weight:normal;">1</div>
<div style="position:absolute;left:848px;top:203.10000000000002px;width:122.5px;height:9.8px;background:#4f87b6;"></div>
<div style="position:absolute;left:975px;top:203.40000000000003px;width:37px;height:9.6px;background:#2b2b2b;"></div>
<div class="t" style="transform-origin:100% 50%;left:850px;width:116.500px;text-align:right;top:202.3px;font-size:8px;color:#ffffff;font-weight:bold;-webkit-text-stroke:0.05px">Scale Z</div>
<div class="t " style="left:976.5px;top:202.00px;font-size:8px;color:#ececec;font-weight:normal;">1</div>
<div style="position:absolute;left:975px;top:213.8px;width:37px;height:9.6px;background:#2b2b2b;"></div>
<div class="t" style="transform-origin:100% 50%;left:850px;width:116.500px;text-align:right;top:212.7px;font-size:8px;color:#d8d8d8;font-weight:normal;">Visibility</div>
<div class="t " style="left:976.5px;top:212.40px;font-size:8px;color:#ececec;font-weight:normal;">on</div>
<div class="t " style="left:848.5px;top:223.60px;font-size:7.8px;color:#e0e0e0;font-weight:bold;-webkit-text-stroke:0.05px currentColor">SHAPES</div>
<div style="position:absolute;left:848px;top:233.7px;width:164px;height:9.8px;background:#3a3a3a;"></div>
<div class="t " style="left:855.5px;top:234.40px;font-size:8px;color:#e4e4e4;font-weight:bold;-webkit-text-stroke:0.05px currentColor">ball0Shape1</div>
<div class="t " style="left:848.5px;top:244.20px;font-size:7.8px;color:#e0e0e0;font-weight:bold;-webkit-text-stroke:0.05px currentColor">INPUTS</div>
<div class="t " style="left:855.5px;top:255.10px;font-size:8px;color:#e4e4e4;font-weight:bold;-webkit-text-stroke:0.05px currentColor">ballpolySphere1</div>
<div style="position:absolute;left:848px;top:274.8px;width:164px;height:55.5px;background:#2b2b2b;"></div>
<div style="position:absolute;left:902px;top:333px;width:56px;height:1px;background:#5a5a5a;"></div>
<div style="position:absolute;left:1012.7px;top:92px;width:11.3px;height:456px;background:#3e3e3e;"></div>
<div style="position:absolute;left:1012.7px;top:96px;width:11.3px;height:111px;background:#444444;"></div>
<div style="position:absolute;left:1012.7px;top:208px;width:11.3px;height:67px;background:#3a3a3a;"></div>
<div style="position:absolute;left:1012.7px;top:276px;width:11.3px;height:64px;background:#3a3a3a;"></div>
<div class="t" style="left:1024.3px;top:101px;font-size:7.7px;color:#d8d8d8;transform-origin:0 0;transform:rotate(90deg);letter-spacing:0.050px;-webkit-text-stroke:0.1px">Channel Box / Layer Editor</div>
<div class="t" style="left:1024.3px;top:212px;font-size:7.7px;color:#8a8a8a;transform-origin:0 0;transform:rotate(90deg);letter-spacing:0.050px;-webkit-text-stroke:0.1px">Attribute Editor</div>
<div class="t" style="left:1024.3px;top:279.5px;font-size:7.7px;color:#8a8a8a;transform-origin:0 0;transform:rotate(90deg);letter-spacing:0.050px;-webkit-text-stroke:0.1px">Modeling Toolkit</div>
<div style="position:absolute;left:847.5px;top:337.5px;width:165px;height:208px;background:#444444;"></div>
<div style="position:absolute;left:849.5px;top:339.8px;width:162px;height:10.8px;background:#3a3a3a;"></div>
<div style="position:absolute;left:849.5px;top:339.8px;width:37.8px;height:11px;background:#444444;"></div>
<div style="position:absolute;left:919.5px;top:339.8px;width:1.2px;height:10.8px;background:#444;"></div>
<div class="t " style="left:855px;top:339.90px;font-size:8px;color:#ffffff;font-weight:bold;-webkit-text-stroke:0.05px currentColor">Display</div>
<div class="t " style="left:895.5px;top:339.90px;font-size:8px;color:#a8a8a8;font-weight:normal;">Anim</div>
<div class="t " style="left:854.8px;top:352.40px;font-size:8px;color:#e4e4e4;font-weight:normal;">Layers</div>
<div class="t " style="left:886.4px;top:352.40px;font-size:8px;color:#e4e4e4;font-weight:normal;">Options</div>
<div class="t " style="left:923.7px;top:352.40px;font-size:8px;color:#e4e4e4;font-weight:normal;">Help</div>
<svg style="position:absolute;left:950.2px;top:367.2px;" width="8.6" height="8.6" viewBox="0 0 10 10"><path d="M0 5l5.500-3.500v7z" fill="#e0e0e0"/><path d="M8.500 2.500v5M7 4l1.500-1.500l1.500 1.500" stroke="#3fb6c6" stroke-width="1" fill="none"/></svg>
<svg style="position:absolute;left:965.4000000000001px;top:367.2px;" width="8.6" height="8.6" viewBox="0 0 10 10"><path d="M0 5l5.500-3.500v7z" fill="#e0e0e0"/><path d="M8.500 2.500v5M7 6l1.500 1.500l1.500-1.500" stroke="#3fb6c6" stroke-width="1" fill="none"/></svg>
<svg style="position:absolute;left:982.4000000000001px;top:367.2px;" width="8.6" height="8.6" viewBox="0 0 10 10"><path d="M0 5.500l5-3l4 2.500l-5 3z" fill="#e0e0e0"/><path d="M0 5.500l4 2.500v1.200l-4-2.500z" fill="#aaa"/><path d="M8.500 0.500v3M7 2h3" stroke="#3fb6c6" stroke-width="1"/></svg>
<svg style="position:absolute;left:998.1px;top:367.2px;" width="8.6" height="8.6" viewBox="0 0 10 10"><path d="M0 5.500l5-3l4 2.500l-5 3z" fill="#e0e0e0"/><path d="M0 5.500l4 2.500v1.200l-4-2.500z" fill="#aaa"/><circle cx="8.500" cy="2" r="1.600" fill="#3fb6c6"/></svg>
<div style="position:absolute;left:850px;top:381.4px;width:160px;height:152.7px;background:#2b2b2b;"></div>
<div style="position:absolute;left:850px;top:535.6px;width:160px;height:6.8px;background:#3a3a3a;"></div>
<div style="position:absolute;left:858px;top:535.8px;width:100px;height:6.4px;background:#686868;border-radius:1.500px;"></div>
<svg style="position:absolute;left:851.5px;top:536.2px;" width="4" height="5.5" viewBox="0 0 4 5.5"><path d="M4 0v5.500l-4-2.750z" fill="#d8d8d8"/></svg>
<svg style="position:absolute;left:1004.5px;top:536.2px;" width="4" height="5.5" viewBox="0 0 4 5.5"><path d="M0 0v5.500l4-2.750z" fill="#d8d8d8"/></svg>
<div style="position:absolute;left:0px;top:548px;width:1024px;height:86px;background:#444444;"></div>
<div style="position:absolute;left:0px;top:547.5px;width:1024px;height:1px;background:#3c3c3c;"></div>
<div style="position:absolute;left:2px;top:553px;width:4px;height:17px;background:repeating-linear-gradient(#4c4c4c 0 1px,#404040 1px 2px);"></div>
<div style="position:absolute;left:8.3px;top:552px;width:836.5px;height:18.8px;background:#2b2b2b;"></div>
<div style="position:absolute;left:140.05999999999997px;top:552px;width:5.5px;height:18.8px;background:#6e6e6e;"></div>
<div style="position:absolute;left:34.43px;top:560.3px;width:1.1px;height:10.5px;background:#909090;"></div>
<div class="t " style="left:35.779999999999994px;top:550.90px;font-size:7.6px;color:#969696;font-weight:normal;-webkit-text-stroke:0">5</div>
<div style="position:absolute;left:62.029999999999994px;top:560.3px;width:1.1px;height:10.5px;background:#909090;"></div>
<div class="t " style="left:63.37999999999999px;top:550.90px;font-size:7.6px;color:#969696;font-weight:normal;-webkit-text-stroke:0">10</div>
<div style="position:absolute;left:89.63000000000001px;top:560.3px;width:1.1px;height:10.5px;background:#909090;"></div>
<div class="t " style="left:90.98px;top:550.90px;font-size:7.6px;color:#969696;font-weight:normal;-webkit-text-stroke:0">15</div>
<div style="position:absolute;left:117.23px;top:560.3px;width:1.1px;height:10.5px;background:#909090;"></div>
<div class="t " style="left:118.58px;top:550.90px;font-size:7.6px;color:#969696;font-weight:normal;-webkit-text-stroke:0">20</div>
<div style="position:absolute;left:144.82999999999998px;top:560.3px;width:1.1px;height:10.5px;background:#909090;"></div>
<div class="t " style="left:146.18px;top:550.90px;font-size:7.6px;color:#969696;font-weight:normal;-webkit-text-stroke:0">25</div>
<div style="position:absolute;left:172.42999999999998px;top:560.3px;width:1.1px;height:10.5px;background:#909090;"></div>
<div class="t " style="left:173.78px;top:550.90px;font-size:7.6px;color:#969696;font-weight:normal;-webkit-text-stroke:0">30</div>
<div style="position:absolute;left:200.02999999999997px;top:560.3px;width:1.1px;height:10.5px;background:#909090;"></div>
<div class="t " style="left:201.38px;top:550.90px;font-size:7.6px;color:#969696;font-weight:normal;-webkit-text-stroke:0">35</div>
<div style="position:absolute;left:227.62999999999997px;top:560.3px;width:1.1px;height:10.5px;background:#909090;"></div>
<div class="t " style="left:228.98px;top:550.90px;font-size:7.6px;color:#969696;font-weight:normal;-webkit-text-stroke:0">40</div>
<div style="position:absolute;left:255.23px;top:560.3px;width:1.1px;height:10.5px;background:#909090;"></div>
<div class="t " style="left:256.58px;top:550.90px;font-size:7.6px;color:#969696;font-weight:normal;-webkit-text-stroke:0">45</div>
<div style="position:absolute;left:282.8299999999999px;top:560.3px;width:1.1px;height:10.5px;background:#909090;"></div>
<div class="t " style="left:284.17999999999995px;top:550.90px;font-size:7.6px;color:#969696;font-weight:normal;-webkit-text-stroke:0">50</div>
<div style="position:absolute;left:310.42999999999995px;top:560.3px;width:1.1px;height:10.5px;background:#909090;"></div>
<div class="t " style="left:311.78px;top:550.90px;font-size:7.6px;color:#969696;font-weight:normal;-webkit-text-stroke:0">55</div>
<div style="position:absolute;left:338.0299999999999px;top:560.3px;width:1.1px;height:10.5px;background:#909090;"></div>
<div class="t " style="left:339.37999999999994px;top:550.90px;font-size:7.6px;color:#969696;font-weight:normal;-webkit-text-stroke:0">60</div>
<div style="position:absolute;left:365.62999999999994px;top:560.3px;width:1.1px;height:10.5px;background:#909090;"></div>
<div class="t " style="left:366.97999999999996px;top:550.90px;font-size:7.6px;color:#969696;font-weight:normal;-webkit-text-stroke:0">65</div>
<div style="position:absolute;left:393.22999999999996px;top:560.3px;width:1.1px;height:10.5px;background:#909090;"></div>
<div class="t " style="left:394.58px;top:550.90px;font-size:7.6px;color:#969696;font-weight:normal;-webkit-text-stroke:0">70</div>
<div style="position:absolute;left:420.8299999999999px;top:560.3px;width:1.1px;height:10.5px;background:#909090;"></div>
<div class="t " style="left:422.17999999999995px;top:550.90px;font-size:7.6px;color:#969696;font-weight:normal;-webkit-text-stroke:0">75</div>
<div style="position:absolute;left:448.42999999999995px;top:560.3px;width:1.1px;height:10.5px;background:#909090;"></div>
<div class="t " style="left:449.78px;top:550.90px;font-size:7.6px;color:#969696;font-weight:normal;-webkit-text-stroke:0">80</div>
<div style="position:absolute;left:476.0299999999999px;top:560.3px;width:1.1px;height:10.5px;background:#909090;"></div>
<div class="t " style="left:477.37999999999994px;top:550.90px;font-size:7.6px;color:#969696;font-weight:normal;-webkit-text-stroke:0">85</div>
<div style="position:absolute;left:503.62999999999994px;top:560.3px;width:1.1px;height:10.5px;background:#909090;"></div>
<div class="t " style="left:504.97999999999996px;top:550.90px;font-size:7.6px;color:#969696;font-weight:normal;-webkit-text-stroke:0">90</div>
<div style="position:absolute;left:531.23px;top:560.3px;width:1.1px;height:10.5px;background:#909090;"></div>
<div class="t " style="left:532.5799999999999px;top:550.90px;font-size:7.6px;color:#969696;font-weight:normal;-webkit-text-stroke:0">95</div>
<div style="position:absolute;left:558.8299999999999px;top:560.3px;width:1.1px;height:10.5px;background:#909090;"></div>
<div class="t " style="left:560.1799999999998px;top:550.90px;font-size:7.6px;color:#969696;font-weight:normal;-webkit-text-stroke:0">100</div>
<div style="position:absolute;left:586.43px;top:560.3px;width:1.1px;height:10.5px;background:#909090;"></div>
<div class="t " style="left:587.7799999999999px;top:550.90px;font-size:7.6px;color:#969696;font-weight:normal;-webkit-text-stroke:0">105</div>
<div style="position:absolute;left:614.03px;top:560.3px;width:1.1px;height:10.5px;background:#909090;"></div>
<div class="t " style="left:615.3799999999999px;top:550.90px;font-size:7.6px;color:#969696;font-weight:normal;-webkit-text-stroke:0">110</div>
<div style="position:absolute;left:641.63px;top:560.3px;width:1.1px;height:10.5px;background:#909090;"></div>
<div class="t " style="left:642.9799999999999px;top:550.90px;font-size:7.6px;color:#969696;font-weight:normal;-webkit-text-stroke:0">115</div>
<div style="position:absolute;left:669.23px;top:560.3px;width:1.1px;height:10.5px;background:#909090;"></div>
<div class="t " style="left:670.5799999999999px;top:550.90px;font-size:7.6px;color:#969696;font-weight:normal;-webkit-text-stroke:0">120</div>
<div style="position:absolute;left:696.8299999999999px;top:560.3px;width:1.1px;height:10.5px;background:#909090;"></div>
<div class="t " style="left:698.1799999999998px;top:550.90px;font-size:7.6px;color:#969696;font-weight:normal;-webkit-text-stroke:0">125</div>
<div style="position:absolute;left:724.43px;top:560.3px;width:1.1px;height:10.5px;background:#909090;"></div>
<div class="t " style="left:725.7799999999999px;top:550.90px;font-size:7.6px;color:#969696;font-weight:normal;-webkit-text-stroke:0">130</div>
<div style="position:absolute;left:752.03px;top:560.3px;width:1.1px;height:10.5px;background:#909090;"></div>
<div class="t " style="left:753.3799999999999px;top:550.90px;font-size:7.6px;color:#969696;font-weight:normal;-webkit-text-stroke:0">135</div>
<div style="position:absolute;left:779.63px;top:560.3px;width:1.1px;height:10.5px;background:#909090;"></div>
<div class="t " style="left:780.9799999999999px;top:550.90px;font-size:7.6px;color:#969696;font-weight:normal;-webkit-text-stroke:0">140</div>
<div style="position:absolute;left:807.2299999999999px;top:560.3px;width:1.1px;height:10.5px;background:#909090;"></div>
<div class="t " style="left:808.5799999999998px;top:550.90px;font-size:7.6px;color:#969696;font-weight:normal;-webkit-text-stroke:0">145</div>
<div style="position:absolute;left:834.8299999999999px;top:560.3px;width:1.1px;height:10.5px;background:#909090;"></div>
<div class="t " style="left:836.1799999999998px;top:550.90px;font-size:7.6px;color:#969696;font-weight:normal;-webkit-text-stroke:0">15</div>
<div style="position:absolute;left:12px;top:552px;width:1px;height:18.8px;background:#c42a20;"></div>
<div style="position:absolute;left:62px;top:552px;width:1px;height:18.8px;background:#c42a20;"></div>
<div style="position:absolute;left:139px;top:552px;width:1px;height:18.8px;background:#c42a20;"></div>
<div style="position:absolute;left:145px;top:552px;width:1px;height:18.8px;background:#c42a20;"></div>
<div style="position:absolute;left:150px;top:552px;width:1px;height:18.8px;background:#c42a20;"></div>
<div style="position:absolute;left:211px;top:552px;width:1px;height:18.8px;background:#c42a20;"></div>
<div style="position:absolute;left:283px;top:552px;width:1px;height:18.8px;background:#c42a20;"></div>
<div style="position:absolute;left:333px;top:552px;width:1px;height:18.8px;background:#c42a20;"></div>
<div style="position:absolute;left:382px;top:552px;width:1px;height:18.8px;background:#c42a20;"></div>
<div style="position:absolute;left:415px;top:552px;width:1px;height:18.8px;background:#c42a20;"></div>
<div style="position:absolute;left:448px;top:552px;width:1px;height:18.8px;background:#c42a20;"></div>
<div style="position:absolute;left:471px;top:552px;width:1px;height:18.8px;background:#c42a20;"></div>
<div style="position:absolute;left:498px;top:552px;width:1px;height:18.8px;background:#c42a20;"></div>
<div style="position:absolute;left:515px;top:552px;width:1px;height:18.8px;background:#c42a20;"></div>
<div style="position:absolute;left:531px;top:552px;width:1px;height:18.8px;background:#c42a20;"></div>
<div style="position:absolute;left:542px;top:552px;width:1px;height:18.8px;background:#c42a20;"></div>
<div style="position:absolute;left:553px;top:552px;width:1px;height:18.8px;background:#c42a20;"></div>
<div style="position:absolute;left:780px;top:552px;width:1px;height:18.8px;background:#c42a20;"></div>
<div style="position:absolute;left:835px;top:552px;width:1px;height:18.8px;background:#c42a20;"></div>
<div class="t " style="left:140.16px;top:559.90px;font-size:7.6px;color:#ffffff;font-weight:bold;-webkit-text-stroke:0.05px currentColor">24</div>
<div style="position:absolute;left:850px;top:556px;width:43.5px;height:11.3px;background:#2b2b2b;"></div>
<div class="t " style="left:853px;top:556.40px;font-size:8px;color:#e8e8e8;font-weight:normal;">24</div>
<svg style="position:absolute;left:900px;top:556.9px;" width="11" height="8.7" viewBox="0 0 11 9.2"><rect x="0" y="0" width="1.500" height="9.200" fill="#cccccc"/><path d="M6.300 0.800v7.600l-4.300-3.800zM11 0.800v7.600l-4.300-3.800z" fill="#cccccc"/></svg>
<svg style="position:absolute;left:916.4px;top:556.9px;" width="9" height="8.7" viewBox="0 0 9 9.2"><rect x="0" y="0" width="1.500" height="9.200" fill="#cccccc"/><path d="M9 0.300v8.600l-6-4.300z" fill="#cccccc"/></svg>
<svg style="position:absolute;left:930.7px;top:556.9px;" width="9" height="8.7" viewBox="0 0 9 9.2"><rect x="0" y="-0.800" width="1.800" height="10.800" fill="#e88a2a"/><path d="M9 0.300v8.600l-6-4.300z" fill="#cccccc"/></svg>
<svg style="position:absolute;left:946.4px;top:556.9px;" width="8.6" height="8.7" viewBox="0 0 8.6 9.2"><path d="M8.600 0v9.200l-8.600-4.600z" fill="#cccccc"/></svg>
<svg style="position:absolute;left:961.3px;top:556.9px;" width="8.6" height="8.7" viewBox="0 0 8.6 9.2"><path d="M0 0v9.200l8.600-4.600z" fill="#cccccc"/></svg>
<svg style="position:absolute;left:976px;top:556.9px;" width="9" height="8.7" viewBox="0 0 9 9.2"><rect x="7.200" y="-0.800" width="1.800" height="10.800" fill="#e88a2a"/><path d="M0 0.300v8.600l6-4.300z" fill="#cccccc"/></svg>
<svg style="position:absolute;left:991px;top:556.9px;" width="9" height="8.7" viewBox="0 0 9 9.2"><rect x="7.500" y="0" width="1.500" height="9.200" fill="#cccccc"/><path d="M0 0.300v8.600l6-4.300z" fill="#cccccc"/></svg>
<svg style="position:absolute;left:1005px;top:556.9px;" width="11" height="8.7" viewBox="0 0 11 9.2"><rect x="9.500" y="0" width="1.500" height="9.200" fill="#cccccc"/><path d="M0 0.800v7.600l4.300-3.800zM4.700 0.800v7.600l4.300-3.800z" fill="#cccccc"/></svg>
<div style="position:absolute;left:0px;top:573px;width:1024px;height:1px;background:#3c3c3c;"></div>
<div style="position:absolute;left:2px;top:578px;width:4px;height:14px;background:repeating-linear-gradient(#4c4c4c 0 1px,#404040 1px 2px);"></div>
<div style="position:absolute;left:9px;top:577.6px;width:44.2px;height:14px;background:#2b2b2b;"></div>
<div style="position:absolute;left:59px;top:577.6px;width:43.8px;height:14px;background:#2b2b2b;"></div>
<div class="t " style="left:12.5px;top:579.50px;font-size:8px;color:#e8e8e8;font-weight:normal;">1</div>
<div class="t " style="left:62.5px;top:579.50px;font-size:8px;color:#e8e8e8;font-weight:normal;">1</div>
<div style="position:absolute;left:110.5px;top:578px;width:603px;height:13.2px;background:#666666;border-radius:1.500px;"></div>
<div style="position:absolute;left:113.2px;top:580.8px;width:7.3px;height:7.6px;background:#8c8c8c;border-radius:1.800px;"></div>
<div style="position:absolute;left:703.8px;top:580.8px;width:7.3px;height:7.6px;background:#8c8c8c;border-radius:1.800px;"></div>
<div class="t " style="left:123.5px;top:579.40px;font-size:7.6px;color:#e8e8e8;font-weight:normal;">1</div>
<div class="t " style="left:687.3px;top:579.40px;font-size:7.6px;color:#e8e8e8;font-weight:normal;">150</div>
<div style="position:absolute;left:722px;top:577.6px;width:44px;height:14px;background:#2b2b2b;"></div>
<div style="position:absolute;left:772px;top:577.6px;width:43.8px;height:14px;background:#2b2b2b;"></div>
<div class="t " style="left:725.5px;top:579.50px;font-size:8px;color:#e8e8e8;font-weight:normal;">150</div>
<div class="t " style="left:775.5px;top:579.50px;font-size:8px;color:#e8e8e8;font-weight:normal;">150</div>
<svg style="position:absolute;left:820.5px;top:581.5px;" width="5.5" height="3.5" viewBox="0 0 5.5 3.5"><path d="M0 0h5.500l-2.750 3.500z" fill="#6a6a6a"/></svg>
<div style="position:absolute;left:831.8px;top:578px;width:64px;height:14px;background:#484848;box-shadow:inset 0 0 0 0.600px #555;"></div>
<div class="t " style="left:834.5px;top:579.60px;font-size:7.6px;color:#e0e0e0;font-weight:normal;">No Anim Layer</div>
<svg style="position:absolute;left:903.8px;top:581.5px;" width="5.5" height="3.5" viewBox="0 0 5.5 3.5"><path d="M0 0h5.500l-2.750 3.500z" fill="#6a6a6a"/></svg>
<div style="position:absolute;left:914.6px;top:578px;width:64.7px;height:14px;background:#484848;box-shadow:inset 0 0 0 0.600px #555;"></div>
<div class="t " style="left:918px;top:579.60px;font-size:7.6px;color:#e0e0e0;font-weight:normal;">No Character Set</div>
<svg style="position:absolute;left:986px;top:579.5px;" width="11" height="11" viewBox="0 0 11 11"><circle cx="5.500" cy="5.500" r="4.300" fill="none" stroke="#d0d0d0" stroke-width="1"/><path d="M5.500 2.800v3h2.500" stroke="#e88a2a" stroke-width="1.100" fill="none"/><path d="M0 4l1.200 1.800l1.500-1.400" stroke="#d0d0d0" stroke-width="0.800" fill="none"/></svg>
<svg style="position:absolute;left:1004px;top:578.5px;" width="13" height="13" viewBox="0 0 13 13"><circle cx="3" cy="2.500" r="1.800" fill="none" stroke="#c8c8c8" stroke-width="0.900"/><circle cx="8.500" cy="3.500" r="1.500" fill="#e88a2a"/><path d="M8 5l-1 3.500l2 1l-0.500 3M7 8.500l-2.500 1l-1 2M5 5.500l2.500 0.500l2 2h1.500" stroke="#e88a2a" stroke-width="1.300" fill="none"/></svg>
<div style="position:absolute;left:0px;top:596px;width:1024px;height:1px;background:#3c3c3c;"></div>
<div style="position:absolute;left:2px;top:600px;width:4px;height:14px;background:repeating-linear-gradient(#4c4c4c 0 1px,#404040 1px 2px);"></div>
<div class="t " style="left:16px;top:601.60px;font-size:7.3px;color:#e8e8e8;font-weight:bold;-webkit-text-stroke:0.05px currentColor">MEL</div>
<div style="position:absolute;left:38.5px;top:599.5px;width:220.5px;height:14.5px;background:#2b2b2b;"></div>
<div style="position:absolute;left:264px;top:599.5px;width:738.5px;height:14.5px;background:#2b2b2b;"></div>
<svg style="position:absolute;left:1006px;top:601px;" width="12" height="12" viewBox="0 0 12 12"><rect x="0" y="0" width="12" height="12" fill="#d0d0d0"/><rect x="1" y="2.500" width="10" height="8.500" fill="#555"/><text x="6" y="9.500" font-size="6.500" font-weight="bold" text-anchor="middle" fill="#e0e0e0" font-family="Liberation Sans, sans-serif">{;}</text></svg>
<div style="position:absolute;left:0px;top:617.5px;width:1024px;height:1px;background:#3c3c3c;"></div>
<div style="position:absolute;left:2px;top:620px;width:4px;height:12px;background:repeating-linear-gradient(#4c4c4c 0 1px,#404040 1px 2px);"></div>
<svg style="position:absolute;left:1012px;top:622px;" width="12" height="12" viewBox="0 0 12 12"><path d="M12 2l-10 10M12 6l-6 6" stroke="#777" stroke-width="0.800"/></svg>
</div></div></body></html>
